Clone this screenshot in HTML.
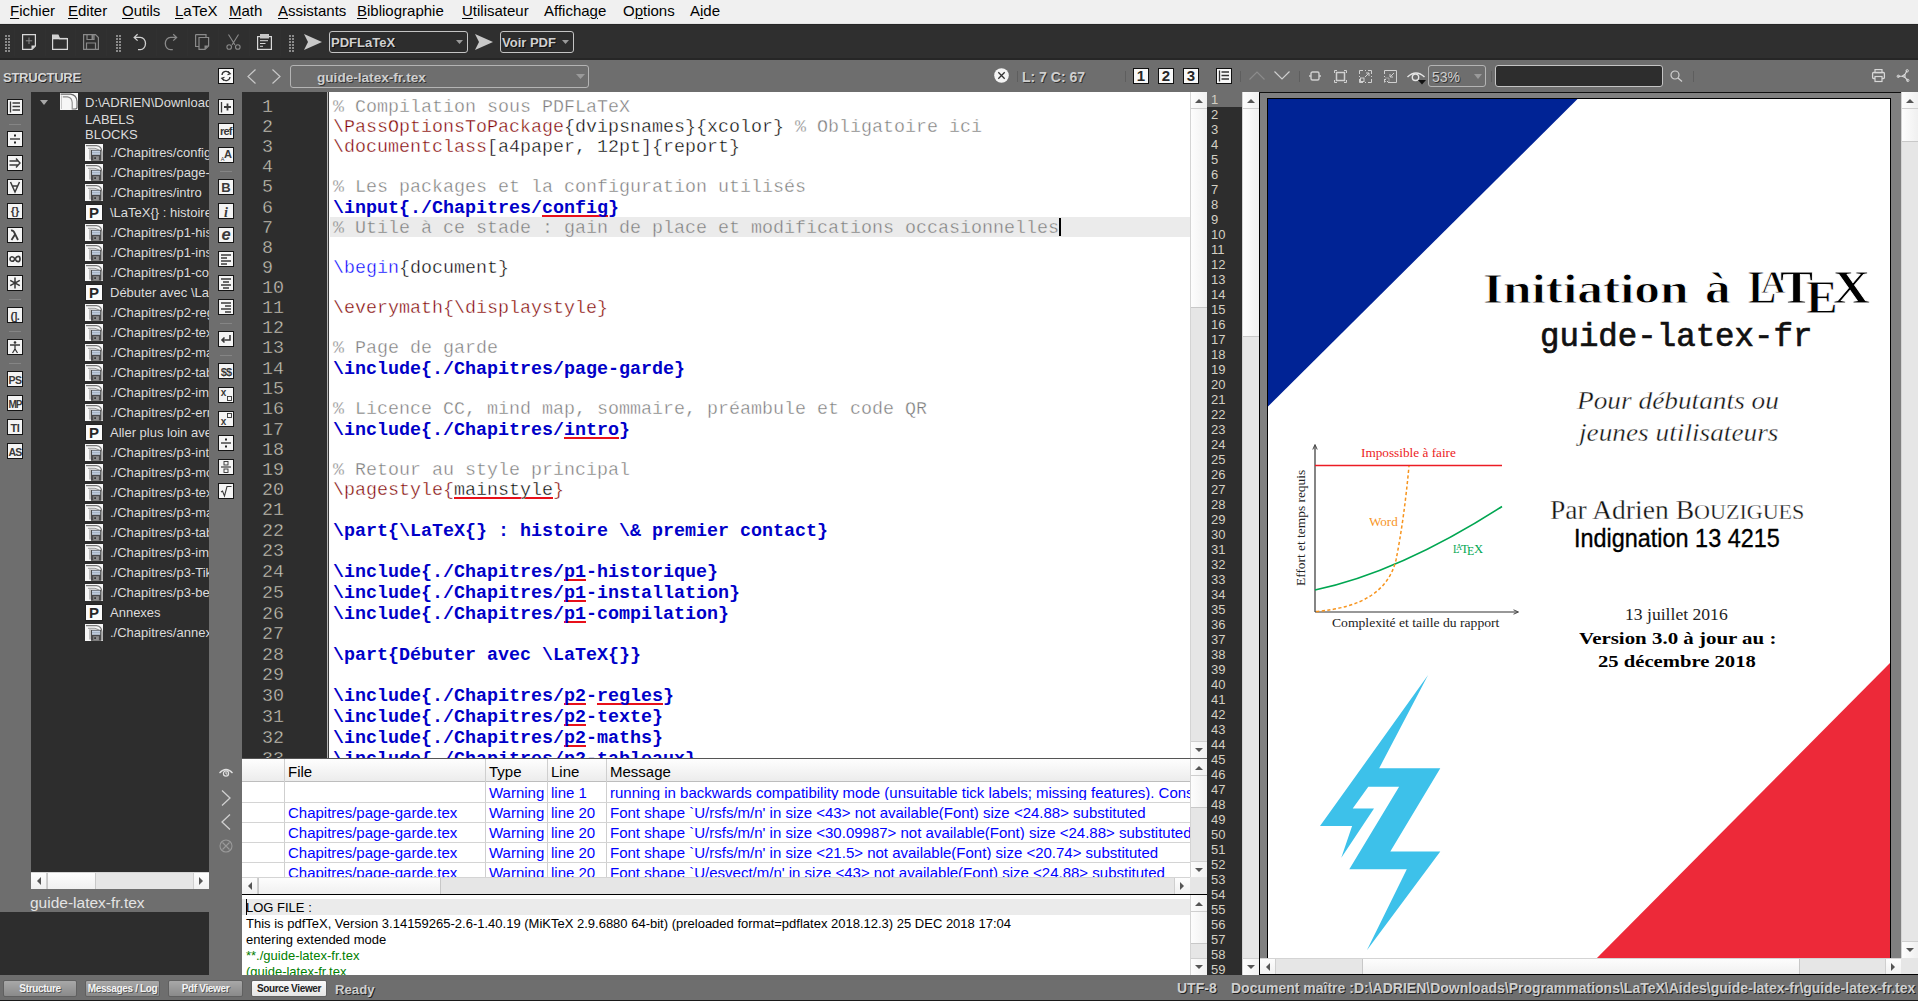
<!DOCTYPE html><html><head><meta charset="utf-8"><style>
*{margin:0;padding:0;box-sizing:border-box}
html,body{width:1918px;height:1001px;overflow:hidden;background:#6e6e6e;font-family:"Liberation Sans",sans-serif}
.a{position:absolute}
.t{position:absolute;white-space:pre;line-height:1}
.mono{font-family:"Liberation Mono",monospace}
.serif{font-family:"Liberation Serif",serif}
</style></head><body>
<div class="a" style="left:0px;top:0px;width:1918px;height:24px;background:#f0f0f0;"></div>
<div class="t" style="left:10px;top:3px;font-size:15px;color:#000;"><span style="text-decoration:underline;text-underline-offset:2px;text-decoration-thickness:1px">F</span>ichier</div>
<div class="t" style="left:68px;top:3px;font-size:15px;color:#000;"><span style="text-decoration:underline;text-underline-offset:2px;text-decoration-thickness:1px">E</span>diter</div>
<div class="t" style="left:122px;top:3px;font-size:15px;color:#000;"><span style="text-decoration:underline;text-underline-offset:2px;text-decoration-thickness:1px">O</span>utils</div>
<div class="t" style="left:175px;top:3px;font-size:15px;color:#000;"><span style="text-decoration:underline;text-underline-offset:2px;text-decoration-thickness:1px">L</span>aTeX</div>
<div class="t" style="left:229px;top:3px;font-size:15px;color:#000;"><span style="text-decoration:underline;text-underline-offset:2px;text-decoration-thickness:1px">M</span>ath</div>
<div class="t" style="left:278px;top:3px;font-size:15px;color:#000;"><span style="text-decoration:underline;text-underline-offset:2px;text-decoration-thickness:1px">A</span>ssistants</div>
<div class="t" style="left:357px;top:3px;font-size:15px;color:#000;"><span style="text-decoration:underline;text-underline-offset:2px;text-decoration-thickness:1px">B</span>ibliographie</div>
<div class="t" style="left:462px;top:3px;font-size:15px;color:#000;"><span style="text-decoration:underline;text-underline-offset:2px;text-decoration-thickness:1px">U</span>tilisateur</div>
<div class="t" style="left:544px;top:3px;font-size:15px;color:#000;">Afficha<span style="text-decoration:underline;text-underline-offset:2px;text-decoration-thickness:1px">g</span>e</div>
<div class="t" style="left:623px;top:3px;font-size:15px;color:#000;">O<span style="text-decoration:underline;text-underline-offset:2px;text-decoration-thickness:1px">p</span>tions</div>
<div class="t" style="left:690px;top:3px;font-size:15px;color:#000;">A<span style="text-decoration:underline;text-underline-offset:2px;text-decoration-thickness:1px">i</span>de</div>
<div class="a" style="left:0px;top:23px;width:1918px;height:1px;background:#e4e4e4;"></div>
<div class="a" style="left:0px;top:24px;width:1918px;height:36px;background:#2f2f2f;"></div>
<div class="a" style="left:0px;top:24px;width:1918px;height:1px;background:#262626;"></div>
<div class="a" style="left:0px;top:58px;width:1918px;height:2px;background:#262626;"></div>
<svg class="a" style="left:5px;top:34px;overflow:visible" width="5" height="18" viewBox="0 0 5 18"><rect x="0" y="1" width="2" height="2" fill="#8a8a8a"/><rect x="3" y="1" width="2" height="2" fill="#8a8a8a"/><rect x="0" y="4" width="2" height="2" fill="#8a8a8a"/><rect x="3" y="4" width="2" height="2" fill="#8a8a8a"/><rect x="0" y="7" width="2" height="2" fill="#8a8a8a"/><rect x="3" y="7" width="2" height="2" fill="#8a8a8a"/><rect x="0" y="10" width="2" height="2" fill="#8a8a8a"/><rect x="3" y="10" width="2" height="2" fill="#8a8a8a"/><rect x="0" y="13" width="2" height="2" fill="#8a8a8a"/><rect x="3" y="13" width="2" height="2" fill="#8a8a8a"/><rect x="0" y="16" width="2" height="2" fill="#8a8a8a"/><rect x="3" y="16" width="2" height="2" fill="#8a8a8a"/></svg>
<svg class="a" style="left:116px;top:34px;overflow:visible" width="5" height="18" viewBox="0 0 5 18"><rect x="0" y="1" width="2" height="2" fill="#8a8a8a"/><rect x="3" y="1" width="2" height="2" fill="#8a8a8a"/><rect x="0" y="4" width="2" height="2" fill="#8a8a8a"/><rect x="3" y="4" width="2" height="2" fill="#8a8a8a"/><rect x="0" y="7" width="2" height="2" fill="#8a8a8a"/><rect x="3" y="7" width="2" height="2" fill="#8a8a8a"/><rect x="0" y="10" width="2" height="2" fill="#8a8a8a"/><rect x="3" y="10" width="2" height="2" fill="#8a8a8a"/><rect x="0" y="13" width="2" height="2" fill="#8a8a8a"/><rect x="3" y="13" width="2" height="2" fill="#8a8a8a"/><rect x="0" y="16" width="2" height="2" fill="#8a8a8a"/><rect x="3" y="16" width="2" height="2" fill="#8a8a8a"/></svg>
<svg class="a" style="left:289px;top:34px;overflow:visible" width="5" height="18" viewBox="0 0 5 18"><rect x="0" y="1" width="2" height="2" fill="#8a8a8a"/><rect x="3" y="1" width="2" height="2" fill="#8a8a8a"/><rect x="0" y="4" width="2" height="2" fill="#8a8a8a"/><rect x="3" y="4" width="2" height="2" fill="#8a8a8a"/><rect x="0" y="7" width="2" height="2" fill="#8a8a8a"/><rect x="3" y="7" width="2" height="2" fill="#8a8a8a"/><rect x="0" y="10" width="2" height="2" fill="#8a8a8a"/><rect x="3" y="10" width="2" height="2" fill="#8a8a8a"/><rect x="0" y="13" width="2" height="2" fill="#8a8a8a"/><rect x="3" y="13" width="2" height="2" fill="#8a8a8a"/><rect x="0" y="16" width="2" height="2" fill="#8a8a8a"/><rect x="3" y="16" width="2" height="2" fill="#8a8a8a"/></svg>
<div class="a" style="left:14px;top:28px;width:1px;height:28px;background:#313131;"></div>
<div class="a" style="left:45px;top:28px;width:1px;height:28px;background:#313131;"></div>
<div class="a" style="left:75px;top:28px;width:1px;height:28px;background:#313131;"></div>
<div class="a" style="left:106px;top:28px;width:1px;height:28px;background:#313131;"></div>
<div class="a" style="left:156px;top:28px;width:1px;height:28px;background:#313131;"></div>
<div class="a" style="left:187px;top:28px;width:1px;height:28px;background:#313131;"></div>
<div class="a" style="left:218px;top:28px;width:1px;height:28px;background:#313131;"></div>
<div class="a" style="left:249px;top:28px;width:1px;height:28px;background:#313131;"></div>
<div class="a" style="left:280px;top:28px;width:1px;height:28px;background:#313131;"></div>
<svg class="a" style="left:22px;top:34px;overflow:visible" width="15" height="17" viewBox="0 0 15 17"><path d="M0.6 0.6H13.4V12L10 15.4H0.6Z" fill="none" stroke="#d8d8d8" stroke-width="1.2"/><path d="M13.4 11.5L9.5 15.4V11.5Z" fill="#d8d8d8"/><path d="M7 3.5V10M3.8 6.8H10.2" stroke="#8a8a8a" stroke-width="1"/></svg>
<svg class="a" style="left:52px;top:34px;overflow:visible" width="16" height="16" viewBox="0 0 16 16"><path d="M0.6 3V15.4H15.4V4.6H7.5L6 1H0.6Z" fill="none" stroke="#d8d8d8" stroke-width="1.2"/><path d="M0.6 1H6L7.3 4.6H0.6Z" fill="#d0d0d0"/><path d="M1 4.6H15" stroke="#d8d8d8" stroke-width="1.4"/></svg>
<svg class="a" style="left:83px;top:34px;overflow:visible" width="16" height="16" viewBox="0 0 16 16"><path d="M0.6 0.6H12.5L15.4 3.5V15.4H0.6Z" fill="none" stroke="#8a8a8a" stroke-width="1.2"/><path d="M4 0.6V5.5H11V0.6" fill="none" stroke="#8a8a8a" stroke-width="1.2"/><rect x="8.5" y="1" width="2" height="4" fill="#8a8a8a"/><path d="M3.5 15.4V9H12.5V15.4" fill="none" stroke="#8a8a8a" stroke-width="1.2"/></svg>
<svg class="a" style="left:134px;top:34px;overflow:visible" width="13" height="16" viewBox="0 0 13 16"><path d="M3.6 0.2L0.2 3.4L3.6 6.6M0.4 3.4H6.3A5.2 6.1 0 0 1 6.3 15.6H4" fill="none" stroke="#d0d0d0" stroke-width="1.3"/></svg>
<svg class="a" style="left:165px;top:34px;overflow:visible" width="13" height="16" viewBox="0 0 13 16"><path d="M8.2 0.2L11.6 3.4L8.2 6.6M11.4 3.4H5.5A5.2 6.1 0 0 0 5.5 15.6H7.8" fill="none" stroke="#8a8a8a" stroke-width="1.3"/></svg>
<svg class="a" style="left:195px;top:34px;overflow:visible" width="15" height="16" viewBox="0 0 15 16"><path d="M0.6 0.6H11V3.5M0.6 0.6V12.5H4" fill="none" stroke="#8a8a8a" stroke-width="1.2"/><path d="M4 3.5H13.6V12L10 15.4H4Z" fill="none" stroke="#8a8a8a" stroke-width="1.2"/><path d="M13.6 11.5L9.5 15.4V11.5Z" fill="#8a8a8a"/></svg>
<svg class="a" style="left:226px;top:34px;overflow:visible" width="15" height="16" viewBox="0 0 15 16"><path d="M2.5 0.5L9 11M12.5 0.5L6 11" stroke="#8a8a8a" stroke-width="1.1" fill="none"/><circle cx="3.2" cy="13" r="2.3" fill="none" stroke="#8a8a8a" stroke-width="1.1"/><circle cx="11.8" cy="13" r="2.3" fill="none" stroke="#8a8a8a" stroke-width="1.1"/></svg>
<svg class="a" style="left:257px;top:34px;overflow:visible" width="15" height="16" viewBox="0 0 15 16"><rect x="0.6" y="2.6" width="13.8" height="12.8" fill="none" stroke="#d8d8d8" stroke-width="1.2"/><rect x="3" y="0" width="9" height="4.5" fill="#c8c8c8"/><path d="M3 6.7H11M3 9.5H8.5M3 12.3H6" stroke="#d8d8d8" stroke-width="1"/></svg>
<svg class="a" style="left:304px;top:34px;overflow:visible" width="18" height="16" viewBox="0 0 18 16"><path d="M0 0L18 8L0 16L4 8Z" fill="#c8c8c8"/></svg>
<svg class="a" style="left:475px;top:34px;overflow:visible" width="18" height="16" viewBox="0 0 18 16"><path d="M0 0L18 8L0 16L4 8Z" fill="#c8c8c8"/></svg>
<div class="a" style="left:329px;top:31px;width:139px;height:22px;border:1px solid #c4c4c4;border-radius:3px;background:#2d2d2d"></div>
<div class="t" style="left:331px;top:36px;font-size:13px;color:#d0d0d0;font-weight:bold;text-shadow:1px 1px 0 #111">PDFLaTeX</div>
<svg class="a" style="left:456px;top:40px;overflow:visible" width="7" height="4" viewBox="0 0 7 4"><path d="M0 0H7L3.5 4Z" fill="#9a9a9a"/></svg>
<div class="a" style="left:500px;top:31px;width:74px;height:22px;border:1px solid #c4c4c4;border-radius:3px;background:#2d2d2d"></div>
<div class="t" style="left:502px;top:36px;font-size:13px;color:#d0d0d0;font-weight:bold;text-shadow:1px 1px 0 #111">Voir PDF</div>
<svg class="a" style="left:562px;top:40px;overflow:visible" width="7" height="4" viewBox="0 0 7 4"><path d="M0 0H7L3.5 4Z" fill="#9a9a9a"/></svg>
<div class="a" style="left:0px;top:60px;width:1918px;height:32px;background:#6e6e6e;"></div>
<div class="t" style="left:3px;top:71px;font-size:13px;color:#d8d8d8;font-weight:bold;letter-spacing:-0.25px;text-shadow:1px 1px 0 #222">STRUCTURE</div>
<div class="a" style="left:218px;top:68px;width:16px;height:16px;background:#f8f8f8;border:1px solid #111"><svg width="14" height="14" viewBox="0 0 14 14" style="display:block"><path d="M3 6A4 4 0 0 1 10.5 4.5M11 8A4 4 0 0 1 3.5 9.5" fill="none" stroke="#333" stroke-width="1.3"/><path d="M9 2.5L11.3 4.8L8.5 5.8M5 11.5L2.7 9.2L5.5 8.2" fill="none" stroke="#333" stroke-width="1.2"/></svg></div>
<svg class="a" style="left:247px;top:69px;overflow:visible" width="9" height="15" viewBox="0 0 9 15"><path d="M8.5 0.5L1 7.5L8.5 14.5" fill="none" stroke="#c8c8c8" stroke-width="1.2"/></svg>
<svg class="a" style="left:272px;top:69px;overflow:visible" width="9" height="15" viewBox="0 0 9 15"><path d="M0.5 0.5L8 7.5L0.5 14.5" fill="none" stroke="#c8c8c8" stroke-width="1.2"/></svg>
<div class="a" style="left:290px;top:65px;width:299px;height:23px;border:1px solid #b4b4b4;border-radius:3px"></div>
<div class="t" style="left:317px;top:71px;font-size:13.6px;color:#cfcfcf;font-weight:bold;text-shadow:1px 1px 0 #333">guide-latex-fr.tex</div>
<svg class="a" style="left:576px;top:74px;overflow:visible" width="9" height="5" viewBox="0 0 9 5"><path d="M0 0H9L4.5 5Z" fill="#9a9a9a"/></svg>
<svg class="a" style="left:994px;top:68px;overflow:visible" width="15" height="15" viewBox="0 0 15 15"><circle cx="7.5" cy="7.5" r="7.3" fill="#f4f4f4"/><path d="M4.3 4.3L10.7 10.7M10.7 4.3L4.3 10.7" stroke="#333" stroke-width="1.3"/></svg>
<div class="a" style="left:1017px;top:71px;width:1px;height:11px;background:#5e5e5e;"></div>
<div class="t" style="left:1022px;top:70px;font-size:14px;color:#cfcfcf;font-weight:bold;text-shadow:1px 1px 0 #333">L: 7 C: 67</div>
<div class="a" style="left:1125px;top:71px;width:1px;height:11px;background:#5e5e5e;"></div>
<div class="a" style="left:1133px;top:68px;width:16px;height:16px;background:#f8f8f8;border:1px solid #111;font:bold 15px/14px 'Liberation Sans';color:#262626;text-align:center">1</div>
<div class="a" style="left:1158px;top:68px;width:16px;height:16px;background:#f8f8f8;border:1px solid #111;font:bold 15px/14px 'Liberation Sans';color:#262626;text-align:center">2</div>
<div class="a" style="left:1183px;top:68px;width:16px;height:16px;background:#f8f8f8;border:1px solid #111;font:bold 15px/14px 'Liberation Sans';color:#262626;text-align:center">3</div>
<div class="a" style="left:1216px;top:68px;width:16px;height:16px;background:#f8f8f8;border:1px solid #111"><svg width="14" height="14" viewBox="0 0 14 14" style="display:block"><path d="M2.5 1.5V12.5" stroke="#333" stroke-width="1.3"/><path d="M4.5 3H12M4.5 6.5H12M4.5 10H12" stroke="#333" stroke-width="1.6"/></svg></div>
<div class="a" style="left:1240px;top:71px;width:1px;height:11px;background:#5e5e5e;"></div>
<svg class="a" style="left:1249px;top:71px;overflow:visible" width="16" height="9" viewBox="0 0 16 9"><path d="M0.5 8.5L8 1L15.5 8.5" fill="none" stroke="#8c8c8c" stroke-width="1.2"/></svg>
<svg class="a" style="left:1274px;top:71px;overflow:visible" width="16" height="9" viewBox="0 0 16 9"><path d="M0.5 0.5L8 8L15.5 0.5" fill="none" stroke="#cfcfcf" stroke-width="1.2"/></svg>
<div class="a" style="left:1299px;top:71px;width:1px;height:11px;background:#5e5e5e;"></div>
<svg class="a" style="left:1309px;top:71px;overflow:visible" width="12" height="10" viewBox="0 0 12 10"><rect x="2" y="1" width="8" height="8" rx="1.5" fill="none" stroke="#d0d0d0" stroke-width="1.4"/><path d="M0 5H2M10 5H12" stroke="#d0d0d0" stroke-width="1.4"/></svg>
<svg class="a" style="left:1334px;top:70px;overflow:visible" width="13" height="13" viewBox="0 0 13 13"><rect x="2.5" y="2.5" width="8" height="8" fill="none" stroke="#d0d0d0" stroke-width="1.5"/><path d="M0.5 3V0.5H3M10 0.5H12.5V3M12.5 10V12.5H10M3 12.5H0.5V10" fill="none" stroke="#d0d0d0" stroke-width="1"/></svg>
<svg class="a" style="left:1359px;top:70px;overflow:visible" width="13" height="13" viewBox="0 0 13 13"><path d="M0.5 4V0.5H4M9 0.5H12.5V4M12.5 9V12.5H9M4 12.5H0.5V9M6 0.5H7M0.5 6V7M12.5 6V7M6 12.5H7" fill="none" stroke="#d0d0d0" stroke-width="1"/><rect x="1.5" y="8" width="3.5" height="3.5" fill="none" stroke="#d0d0d0" stroke-width="1"/><path d="M6 7L10 3M7 3H10V6" fill="none" stroke="#d0d0d0" stroke-width="1"/></svg>
<svg class="a" style="left:1384px;top:70px;overflow:visible" width="13" height="13" viewBox="0 0 13 13"><path d="M0.5 4V0.5H12.5V12.5H4M0.5 9V12.5M0.5 6V7M3 12.5" fill="none" stroke="#d0d0d0" stroke-width="1"/><rect x="1.5" y="8" width="3.5" height="3.5" fill="none" stroke="#d0d0d0" stroke-width="1" stroke-dasharray="1 1"/><path d="M10 3L6 7M6 4V7H9" fill="none" stroke="#d0d0d0" stroke-width="1"/></svg>
<svg class="a" style="left:1407px;top:71px;overflow:visible" width="19" height="14" viewBox="0 0 19 14"><path d="M0.5 6Q9 -2 17.5 6" fill="none" stroke="#e6e6e6" stroke-width="1.5"/><circle cx="8.5" cy="6.3" r="3.2" fill="none" stroke="#e6e6e6" stroke-width="1.4"/><path d="M11 9H19L15 13.5Z" fill="#111"/></svg>
<div class="a" style="left:1428px;top:65px;width:58px;height:22px;border:1px solid #b4b4b4;border-radius:3px"></div>
<div class="t" style="left:1432px;top:70px;font-size:14px;color:#cfcfcf;text-shadow:1px 1px 0 #333">53%</div>
<svg class="a" style="left:1474px;top:74px;overflow:visible" width="8" height="5" viewBox="0 0 8 5"><path d="M0 0H8L4 5Z" fill="#9a9a9a"/></svg>
<div class="a" style="left:1491px;top:71px;width:1px;height:11px;background:#5e5e5e;"></div>
<div class="a" style="left:1495px;top:65px;width:168px;height:22px;border:1px solid #c4c4c4;border-radius:3px;background:#2d2d2d"></div>
<svg class="a" style="left:1670px;top:70px;overflow:visible" width="13" height="12" viewBox="0 0 13 12"><circle cx="5" cy="5" r="4" fill="none" stroke="#cfcfcf" stroke-width="1.2"/><path d="M8 8L12 11.5" stroke="#cfcfcf" stroke-width="1.3"/></svg>
<div class="a" style="left:1693px;top:71px;width:1px;height:11px;background:#5e5e5e;"></div>
<svg class="a" style="left:1872px;top:69px;overflow:visible" width="13" height="13" viewBox="0 0 13 13"><rect x="3" y="0.6" width="7" height="3" fill="none" stroke="#d8d8d8" stroke-width="1.2"/><rect x="0.6" y="3.5" width="11.8" height="6" rx="1" fill="none" stroke="#d8d8d8" stroke-width="1.3"/><rect x="3" y="7.5" width="7" height="5" fill="#6e6e6e" stroke="#d8d8d8" stroke-width="1.2"/></svg>
<svg class="a" style="left:1897px;top:69px;overflow:visible" width="13" height="13" viewBox="0 0 13 13"><path d="M0.7 7.3L5.2 7.3L8 5.2L10.1 1.6M5.2 7.3L8 8.5L10.9 11.7M8 5.2L8 8.5" fill="none" stroke="#e0e0e0" stroke-width="1.1"/><circle cx="1.3" cy="7.3" r="1.2" fill="none" stroke="#e0e0e0" stroke-width="0.9"/><circle cx="10.2" cy="1.8" r="1.2" fill="none" stroke="#e0e0e0" stroke-width="0.9"/><circle cx="10.8" cy="11.4" r="1.2" fill="none" stroke="#e0e0e0" stroke-width="0.9"/></svg>
<div class="a" style="left:31px;top:92px;width:178px;height:780px;background:#2d2d2d;"></div>
<div class="a" style="left:0px;top:912px;width:209px;height:63px;background:#2d2d2d;"></div>
<div class="a" style="left:242px;top:92px;width:85px;height:666px;background:#2d2d2d;"></div>
<div class="a" style="left:327px;top:92px;width:1px;height:666px;background:#b4b4b4;"></div>
<div class="a" style="left:328px;top:92px;width:1px;height:666px;background:#3a3a3a;"></div>
<div class="a" style="left:329px;top:92px;width:861px;height:666px;background:#fff;"></div>
<div class="a" style="left:1190px;top:92px;width:17px;height:666px;background:#e6e6e6;"></div>
<div class="a" style="left:242px;top:92px;width:948px;height:666px;overflow:hidden">
<div class="a mono" style="left:20px;top:6px;height:20px;line-height:20px;font-size:18.34px;color:#ccc8bc;white-space:pre;-webkit-text-stroke:0.4px #2d2d2d">1</div>
<div class="a mono" style="left:91px;top:6px;height:20px;line-height:20px;font-size:18.34px;white-space:pre;-webkit-text-stroke:0.4px #fff"><span style="color:#7a7a7a;">% Compilation sous PDFLaTeX</span></div>
<div class="a mono" style="left:20px;top:26px;height:20px;line-height:20px;font-size:18.34px;color:#ccc8bc;white-space:pre;-webkit-text-stroke:0.4px #2d2d2d">2</div>
<div class="a mono" style="left:91px;top:26px;height:20px;line-height:20px;font-size:18.34px;white-space:pre;-webkit-text-stroke:0.4px #fff"><span style="color:#800000;">\PassOptionsToPackage</span><span style="color:#000;">{dvipsnames}{xcolor} </span><span style="color:#7a7a7a;">% Obligatoire ici</span></div>
<div class="a mono" style="left:20px;top:46px;height:20px;line-height:20px;font-size:18.34px;color:#ccc8bc;white-space:pre;-webkit-text-stroke:0.4px #2d2d2d">3</div>
<div class="a mono" style="left:91px;top:46px;height:20px;line-height:20px;font-size:18.34px;white-space:pre;-webkit-text-stroke:0.4px #fff"><span style="color:#800000;">\documentclass</span><span style="color:#000;">[a4paper, 12pt]{report}</span></div>
<div class="a mono" style="left:20px;top:66px;height:20px;line-height:20px;font-size:18.34px;color:#ccc8bc;white-space:pre;-webkit-text-stroke:0.4px #2d2d2d">4</div>
<div class="a mono" style="left:91px;top:66px;height:20px;line-height:20px;font-size:18.34px;white-space:pre;-webkit-text-stroke:0.4px #fff"></div>
<div class="a mono" style="left:20px;top:86px;height:20px;line-height:20px;font-size:18.34px;color:#ccc8bc;white-space:pre;-webkit-text-stroke:0.4px #2d2d2d">5</div>
<div class="a mono" style="left:91px;top:86px;height:20px;line-height:20px;font-size:18.34px;white-space:pre;-webkit-text-stroke:0.4px #fff"><span style="color:#7a7a7a;">% Les packages et la configuration utilisés</span></div>
<div class="a mono" style="left:20px;top:107px;height:20px;line-height:20px;font-size:18.34px;color:#ccc8bc;white-space:pre;-webkit-text-stroke:0.4px #2d2d2d">6</div>
<div class="a mono" style="left:91px;top:107px;height:20px;line-height:20px;font-size:18.34px;white-space:pre;-webkit-text-stroke:0.4px #fff"><span style="color:#0000c8;font-weight:bold;-webkit-text-stroke:0;">\input{./Chapitres/</span><span style="color:#0000c8;font-weight:bold;-webkit-text-stroke:0;text-decoration:underline solid #e8101a;text-decoration-thickness:2px;text-underline-offset:2px;text-decoration-skip-ink:none;">config</span><span style="color:#0000c8;font-weight:bold;-webkit-text-stroke:0;">}</span></div>
<div class="a" style="left:88px;top:125px;width:860px;height:20px;background:#ebebeb"></div>
<div class="a mono" style="left:20px;top:127px;height:20px;line-height:20px;font-size:18.34px;color:#ccc8bc;white-space:pre;-webkit-text-stroke:0.4px #2d2d2d">7</div>
<div class="a mono" style="left:91px;top:127px;height:20px;line-height:20px;font-size:18.34px;white-space:pre;-webkit-text-stroke:0.4px #ebebeb"><span style="color:#7a7a7a;">% Utile à ce stade : gain de place et modifications occasionnelles</span></div>
<div class="a" style="left:817px;top:126px;width:2px;height:18px;background:#000"></div>
<div class="a mono" style="left:20px;top:147px;height:20px;line-height:20px;font-size:18.34px;color:#ccc8bc;white-space:pre;-webkit-text-stroke:0.4px #2d2d2d">8</div>
<div class="a mono" style="left:91px;top:147px;height:20px;line-height:20px;font-size:18.34px;white-space:pre;-webkit-text-stroke:0.4px #fff"></div>
<div class="a mono" style="left:20px;top:167px;height:20px;line-height:20px;font-size:18.34px;color:#ccc8bc;white-space:pre;-webkit-text-stroke:0.4px #2d2d2d">9</div>
<div class="a mono" style="left:91px;top:167px;height:20px;line-height:20px;font-size:18.34px;white-space:pre;-webkit-text-stroke:0.4px #fff"><span style="color:#0000ff;">\begin</span><span style="color:#000;">{document}</span></div>
<div class="a mono" style="left:20px;top:187px;height:20px;line-height:20px;font-size:18.34px;color:#ccc8bc;white-space:pre;-webkit-text-stroke:0.4px #2d2d2d">10</div>
<div class="a mono" style="left:91px;top:187px;height:20px;line-height:20px;font-size:18.34px;white-space:pre;-webkit-text-stroke:0.4px #fff"></div>
<div class="a mono" style="left:20px;top:207px;height:20px;line-height:20px;font-size:18.34px;color:#ccc8bc;white-space:pre;-webkit-text-stroke:0.4px #2d2d2d">11</div>
<div class="a mono" style="left:91px;top:207px;height:20px;line-height:20px;font-size:18.34px;white-space:pre;-webkit-text-stroke:0.4px #fff"><span style="color:#800000;">\everymath{\displaystyle}</span></div>
<div class="a mono" style="left:20px;top:227px;height:20px;line-height:20px;font-size:18.34px;color:#ccc8bc;white-space:pre;-webkit-text-stroke:0.4px #2d2d2d">12</div>
<div class="a mono" style="left:91px;top:227px;height:20px;line-height:20px;font-size:18.34px;white-space:pre;-webkit-text-stroke:0.4px #fff"></div>
<div class="a mono" style="left:20px;top:247px;height:20px;line-height:20px;font-size:18.34px;color:#ccc8bc;white-space:pre;-webkit-text-stroke:0.4px #2d2d2d">13</div>
<div class="a mono" style="left:91px;top:247px;height:20px;line-height:20px;font-size:18.34px;white-space:pre;-webkit-text-stroke:0.4px #fff"><span style="color:#7a7a7a;">% Page de garde</span></div>
<div class="a mono" style="left:20px;top:268px;height:20px;line-height:20px;font-size:18.34px;color:#ccc8bc;white-space:pre;-webkit-text-stroke:0.4px #2d2d2d">14</div>
<div class="a mono" style="left:91px;top:268px;height:20px;line-height:20px;font-size:18.34px;white-space:pre;-webkit-text-stroke:0.4px #fff"><span style="color:#0000c8;font-weight:bold;-webkit-text-stroke:0;">\include{./Chapitres/page-garde}</span></div>
<div class="a mono" style="left:20px;top:288px;height:20px;line-height:20px;font-size:18.34px;color:#ccc8bc;white-space:pre;-webkit-text-stroke:0.4px #2d2d2d">15</div>
<div class="a mono" style="left:91px;top:288px;height:20px;line-height:20px;font-size:18.34px;white-space:pre;-webkit-text-stroke:0.4px #fff"></div>
<div class="a mono" style="left:20px;top:308px;height:20px;line-height:20px;font-size:18.34px;color:#ccc8bc;white-space:pre;-webkit-text-stroke:0.4px #2d2d2d">16</div>
<div class="a mono" style="left:91px;top:308px;height:20px;line-height:20px;font-size:18.34px;white-space:pre;-webkit-text-stroke:0.4px #fff"><span style="color:#7a7a7a;">% Licence CC, mind map, sommaire, préambule et code QR</span></div>
<div class="a mono" style="left:20px;top:329px;height:20px;line-height:20px;font-size:18.34px;color:#ccc8bc;white-space:pre;-webkit-text-stroke:0.4px #2d2d2d">17</div>
<div class="a mono" style="left:91px;top:329px;height:20px;line-height:20px;font-size:18.34px;white-space:pre;-webkit-text-stroke:0.4px #fff"><span style="color:#0000c8;font-weight:bold;-webkit-text-stroke:0;">\include{./Chapitres/</span><span style="color:#0000c8;font-weight:bold;-webkit-text-stroke:0;text-decoration:underline solid #e8101a;text-decoration-thickness:2px;text-underline-offset:2px;text-decoration-skip-ink:none;">intro</span><span style="color:#0000c8;font-weight:bold;-webkit-text-stroke:0;">}</span></div>
<div class="a mono" style="left:20px;top:349px;height:20px;line-height:20px;font-size:18.34px;color:#ccc8bc;white-space:pre;-webkit-text-stroke:0.4px #2d2d2d">18</div>
<div class="a mono" style="left:91px;top:349px;height:20px;line-height:20px;font-size:18.34px;white-space:pre;-webkit-text-stroke:0.4px #fff"></div>
<div class="a mono" style="left:20px;top:369px;height:20px;line-height:20px;font-size:18.34px;color:#ccc8bc;white-space:pre;-webkit-text-stroke:0.4px #2d2d2d">19</div>
<div class="a mono" style="left:91px;top:369px;height:20px;line-height:20px;font-size:18.34px;white-space:pre;-webkit-text-stroke:0.4px #fff"><span style="color:#7a7a7a;">% Retour au style principal</span></div>
<div class="a mono" style="left:20px;top:389px;height:20px;line-height:20px;font-size:18.34px;color:#ccc8bc;white-space:pre;-webkit-text-stroke:0.4px #2d2d2d">20</div>
<div class="a mono" style="left:91px;top:389px;height:20px;line-height:20px;font-size:18.34px;white-space:pre;-webkit-text-stroke:0.4px #fff"><span style="color:#800000;">\pagestyle{</span><span style="color:#000;text-decoration:underline solid #e8101a;text-decoration-thickness:2px;text-underline-offset:2px;text-decoration-skip-ink:none;">mainstyle</span><span style="color:#800000;">}</span></div>
<div class="a mono" style="left:20px;top:409px;height:20px;line-height:20px;font-size:18.34px;color:#ccc8bc;white-space:pre;-webkit-text-stroke:0.4px #2d2d2d">21</div>
<div class="a mono" style="left:91px;top:409px;height:20px;line-height:20px;font-size:18.34px;white-space:pre;-webkit-text-stroke:0.4px #fff"></div>
<div class="a mono" style="left:20px;top:430px;height:20px;line-height:20px;font-size:18.34px;color:#ccc8bc;white-space:pre;-webkit-text-stroke:0.4px #2d2d2d">22</div>
<div class="a mono" style="left:91px;top:430px;height:20px;line-height:20px;font-size:18.34px;white-space:pre;-webkit-text-stroke:0.4px #fff"><span style="color:#0000c8;font-weight:bold;-webkit-text-stroke:0;">\part{\LaTeX{} : histoire \&amp; premier contact}</span></div>
<div class="a mono" style="left:20px;top:450px;height:20px;line-height:20px;font-size:18.34px;color:#ccc8bc;white-space:pre;-webkit-text-stroke:0.4px #2d2d2d">23</div>
<div class="a mono" style="left:91px;top:450px;height:20px;line-height:20px;font-size:18.34px;white-space:pre;-webkit-text-stroke:0.4px #fff"></div>
<div class="a mono" style="left:20px;top:471px;height:20px;line-height:20px;font-size:18.34px;color:#ccc8bc;white-space:pre;-webkit-text-stroke:0.4px #2d2d2d">24</div>
<div class="a mono" style="left:91px;top:471px;height:20px;line-height:20px;font-size:18.34px;white-space:pre;-webkit-text-stroke:0.4px #fff"><span style="color:#0000c8;font-weight:bold;-webkit-text-stroke:0;">\include{./Chapitres/</span><span style="color:#0000c8;font-weight:bold;-webkit-text-stroke:0;text-decoration:underline solid #e8101a;text-decoration-thickness:2px;text-underline-offset:2px;text-decoration-skip-ink:none;">p1</span><span style="color:#0000c8;font-weight:bold;-webkit-text-stroke:0;">-historique}</span></div>
<div class="a mono" style="left:20px;top:492px;height:20px;line-height:20px;font-size:18.34px;color:#ccc8bc;white-space:pre;-webkit-text-stroke:0.4px #2d2d2d">25</div>
<div class="a mono" style="left:91px;top:492px;height:20px;line-height:20px;font-size:18.34px;white-space:pre;-webkit-text-stroke:0.4px #fff"><span style="color:#0000c8;font-weight:bold;-webkit-text-stroke:0;">\include{./Chapitres/</span><span style="color:#0000c8;font-weight:bold;-webkit-text-stroke:0;text-decoration:underline solid #e8101a;text-decoration-thickness:2px;text-underline-offset:2px;text-decoration-skip-ink:none;">p1</span><span style="color:#0000c8;font-weight:bold;-webkit-text-stroke:0;">-installation}</span></div>
<div class="a mono" style="left:20px;top:513px;height:20px;line-height:20px;font-size:18.34px;color:#ccc8bc;white-space:pre;-webkit-text-stroke:0.4px #2d2d2d">26</div>
<div class="a mono" style="left:91px;top:513px;height:20px;line-height:20px;font-size:18.34px;white-space:pre;-webkit-text-stroke:0.4px #fff"><span style="color:#0000c8;font-weight:bold;-webkit-text-stroke:0;">\include{./Chapitres/</span><span style="color:#0000c8;font-weight:bold;-webkit-text-stroke:0;text-decoration:underline solid #e8101a;text-decoration-thickness:2px;text-underline-offset:2px;text-decoration-skip-ink:none;">p1</span><span style="color:#0000c8;font-weight:bold;-webkit-text-stroke:0;">-compilation}</span></div>
<div class="a mono" style="left:20px;top:533px;height:20px;line-height:20px;font-size:18.34px;color:#ccc8bc;white-space:pre;-webkit-text-stroke:0.4px #2d2d2d">27</div>
<div class="a mono" style="left:91px;top:533px;height:20px;line-height:20px;font-size:18.34px;white-space:pre;-webkit-text-stroke:0.4px #fff"></div>
<div class="a mono" style="left:20px;top:554px;height:20px;line-height:20px;font-size:18.34px;color:#ccc8bc;white-space:pre;-webkit-text-stroke:0.4px #2d2d2d">28</div>
<div class="a mono" style="left:91px;top:554px;height:20px;line-height:20px;font-size:18.34px;white-space:pre;-webkit-text-stroke:0.4px #fff"><span style="color:#0000c8;font-weight:bold;-webkit-text-stroke:0;">\part{Débuter avec \LaTeX{}}</span></div>
<div class="a mono" style="left:20px;top:574px;height:20px;line-height:20px;font-size:18.34px;color:#ccc8bc;white-space:pre;-webkit-text-stroke:0.4px #2d2d2d">29</div>
<div class="a mono" style="left:91px;top:574px;height:20px;line-height:20px;font-size:18.34px;white-space:pre;-webkit-text-stroke:0.4px #fff"></div>
<div class="a mono" style="left:20px;top:595px;height:20px;line-height:20px;font-size:18.34px;color:#ccc8bc;white-space:pre;-webkit-text-stroke:0.4px #2d2d2d">30</div>
<div class="a mono" style="left:91px;top:595px;height:20px;line-height:20px;font-size:18.34px;white-space:pre;-webkit-text-stroke:0.4px #fff"><span style="color:#0000c8;font-weight:bold;-webkit-text-stroke:0;">\include{./Chapitres/</span><span style="color:#0000c8;font-weight:bold;-webkit-text-stroke:0;text-decoration:underline solid #e8101a;text-decoration-thickness:2px;text-underline-offset:2px;text-decoration-skip-ink:none;">p2</span><span style="color:#0000c8;font-weight:bold;-webkit-text-stroke:0;">-</span><span style="color:#0000c8;font-weight:bold;-webkit-text-stroke:0;text-decoration:underline solid #e8101a;text-decoration-thickness:2px;text-underline-offset:2px;text-decoration-skip-ink:none;">regles</span><span style="color:#0000c8;font-weight:bold;-webkit-text-stroke:0;">}</span></div>
<div class="a mono" style="left:20px;top:616px;height:20px;line-height:20px;font-size:18.34px;color:#ccc8bc;white-space:pre;-webkit-text-stroke:0.4px #2d2d2d">31</div>
<div class="a mono" style="left:91px;top:616px;height:20px;line-height:20px;font-size:18.34px;white-space:pre;-webkit-text-stroke:0.4px #fff"><span style="color:#0000c8;font-weight:bold;-webkit-text-stroke:0;">\include{./Chapitres/</span><span style="color:#0000c8;font-weight:bold;-webkit-text-stroke:0;text-decoration:underline solid #e8101a;text-decoration-thickness:2px;text-underline-offset:2px;text-decoration-skip-ink:none;">p2</span><span style="color:#0000c8;font-weight:bold;-webkit-text-stroke:0;">-texte}</span></div>
<div class="a mono" style="left:20px;top:637px;height:20px;line-height:20px;font-size:18.34px;color:#ccc8bc;white-space:pre;-webkit-text-stroke:0.4px #2d2d2d">32</div>
<div class="a mono" style="left:91px;top:637px;height:20px;line-height:20px;font-size:18.34px;white-space:pre;-webkit-text-stroke:0.4px #fff"><span style="color:#0000c8;font-weight:bold;-webkit-text-stroke:0;">\include{./Chapitres/</span><span style="color:#0000c8;font-weight:bold;-webkit-text-stroke:0;text-decoration:underline solid #e8101a;text-decoration-thickness:2px;text-underline-offset:2px;text-decoration-skip-ink:none;">p2</span><span style="color:#0000c8;font-weight:bold;-webkit-text-stroke:0;">-maths}</span></div>
<div class="a mono" style="left:20px;top:658px;height:20px;line-height:20px;font-size:18.34px;color:#ccc8bc;white-space:pre;-webkit-text-stroke:0.4px #2d2d2d">33</div>
<div class="a mono" style="left:91px;top:658px;height:20px;line-height:20px;font-size:18.34px;white-space:pre;-webkit-text-stroke:0.4px #fff"><span style="color:#0000c8;font-weight:bold;-webkit-text-stroke:0;">\include{./Chapitres/</span><span style="color:#0000c8;font-weight:bold;-webkit-text-stroke:0;text-decoration:underline solid #e8101a;text-decoration-thickness:2px;text-underline-offset:2px;text-decoration-skip-ink:none;">p2</span><span style="color:#0000c8;font-weight:bold;-webkit-text-stroke:0;">-tableaux}</span></div>
</div>
<div class="a" style="left:7px;top:99px;width:16px;height:16px;background:#f4f4f4;border:1px solid #151515"><svg width="14" height="14" viewBox="0 0 14 14" style="display:block"><path d="M2.5 1.5V12.5" stroke="#3a3a3a" stroke-width="1.3" fill="none"/><path d="M4.5 3H12M4.5 6.5H12M4.5 10H12" stroke="#3a3a3a" stroke-width="1.6" fill="none"/></svg></div>
<div class="a" style="left:7px;top:131px;width:16px;height:16px;background:#f4f4f4;border:1px solid #151515"><svg width="14" height="14" viewBox="0 0 14 14" style="display:block"><path d="M2 7H12" stroke="#3a3a3a" stroke-width="1.4" fill="none"/><rect x="6" y="2.5" width="2" height="2" fill="#222"/><rect x="6" y="9.5" width="2" height="2" fill="#222"/></svg></div>
<div class="a" style="left:7px;top:155px;width:16px;height:16px;background:#f4f4f4;border:1px solid #151515"><svg width="14" height="14" viewBox="0 0 14 14" style="display:block"><path d="M1.5 5H10M1.5 9H10M8 2.5L12 7L8 11.5" stroke="#3a3a3a" stroke-width="1.4" fill="none"/></svg></div>
<div class="a" style="left:7px;top:179px;width:16px;height:16px;background:#f4f4f4;border:1px solid #151515"><svg width="14" height="14" viewBox="0 0 14 14" style="display:block"><path d="M2.5 2L7 12L11.5 2M4.3 6H9.7" stroke="#3a3a3a" stroke-width="1.5" fill="none"/></svg></div>
<div class="a" style="left:7px;top:203px;width:16px;height:16px;background:#f4f4f4;border:1px solid #151515"><svg width="14" height="14" viewBox="0 0 14 14" style="display:block"><text x="7" y="11" font-size="11" font-family="Liberation Sans" font-weight="bold" text-anchor="middle" fill="#3a3a3a" >{}</text></svg></div>
<div class="a" style="left:7px;top:227px;width:16px;height:16px;background:#f4f4f4;border:1px solid #151515"><svg width="14" height="14" viewBox="0 0 14 14" style="display:block"><path d="M3 2.5Q5.5 2 7 6L10 12M7 6.5L3.5 12" stroke="#3a3a3a" stroke-width="1.8" fill="none"/></svg></div>
<div class="a" style="left:7px;top:251px;width:16px;height:16px;background:#f4f4f4;border:1px solid #151515"><svg width="14" height="14" viewBox="0 0 14 14" style="display:block"><path d="M7 7C5 3.5 2 4.5 2 7S5 10.5 7 7S12 3.5 12 7S9 10.5 7 7" stroke="#3a3a3a" stroke-width="1.6" fill="none"/></svg></div>
<div class="a" style="left:7px;top:275px;width:16px;height:16px;background:#f4f4f4;border:1px solid #151515"><svg width="14" height="14" viewBox="0 0 14 14" style="display:block"><path d="M7 1.5V12.5M2.2 4.3L11.8 9.7M2.2 9.7L11.8 4.3" stroke="#3a3a3a" stroke-width="1.5" fill="none"/></svg></div>
<div class="a" style="left:7px;top:307px;width:16px;height:16px;background:#f4f4f4;border:1px solid #151515"><svg width="14" height="14" viewBox="0 0 14 14" style="display:block"><text x="7" y="11.5" font-size="11" font-family="Liberation Sans" font-weight="bold" text-anchor="middle" fill="#3a3a3a" letter-spacing="-0.5">(].</text></svg></div>
<div class="a" style="left:7px;top:339px;width:16px;height:16px;background:#f4f4f4;border:1px solid #151515"><svg width="14" height="14" viewBox="0 0 14 14" style="display:block"><circle cx="7" cy="2.5" r="1.3" fill="#333"/><path d="M2 5H12M7 5V9M7 9L4.5 13M7 9L9.5 13" stroke="#3a3a3a" stroke-width="1.3" fill="none"/></svg></div>
<div class="a" style="left:7px;top:371px;width:16px;height:16px;background:#f4f4f4;border:1px solid #151515"><svg width="14" height="14" viewBox="0 0 14 14" style="display:block"><text x="7" y="11.5" font-size="10.5" font-family="Liberation Sans" font-weight="bold" text-anchor="middle" fill="#3a3a3a" letter-spacing="-0.6">PS</text></svg></div>
<div class="a" style="left:7px;top:395px;width:16px;height:16px;background:#f4f4f4;border:1px solid #151515"><svg width="14" height="14" viewBox="0 0 14 14" style="display:block"><text x="7" y="11.5" font-size="10" font-family="Liberation Sans" font-weight="bold" text-anchor="middle" fill="#3a3a3a" letter-spacing="-1">MP</text></svg></div>
<div class="a" style="left:7px;top:419px;width:16px;height:16px;background:#f4f4f4;border:1px solid #151515"><svg width="14" height="14" viewBox="0 0 14 14" style="display:block"><text x="7" y="11.5" font-size="11" font-family="Liberation Sans" font-weight="bold" text-anchor="middle" fill="#3a3a3a" letter-spacing="-0.5">TI</text></svg></div>
<div class="a" style="left:7px;top:443px;width:16px;height:16px;background:#f4f4f4;border:1px solid #151515"><svg width="14" height="14" viewBox="0 0 14 14" style="display:block"><text x="7" y="11.5" font-size="10.5" font-family="Liberation Sans" font-weight="bold" text-anchor="middle" fill="#3a3a3a" letter-spacing="-0.8">AS</text></svg></div>
<div class="a" style="left:9px;top:124px;width:12px;height:1px;background:#858585;"></div>
<div class="a" style="left:9px;top:299px;width:12px;height:1px;background:#858585;"></div>
<div class="a" style="left:9px;top:331px;width:12px;height:1px;background:#858585;"></div>
<div class="a" style="left:9px;top:363px;width:12px;height:1px;background:#858585;"></div>
<div class="a" style="left:218px;top:99px;width:16px;height:16px;background:#f4f4f4;border:1px solid #151515"><svg width="14" height="14" viewBox="0 0 14 14" style="display:block"><path d="M2.5 2V12.5" stroke="#3a3a3a" stroke-width="1.3" fill="none"/><path d="M5 7H12M8.5 3.5V10.5" stroke="#3a3a3a" stroke-width="1.8" fill="none"/></svg></div>
<div class="a" style="left:218px;top:123px;width:16px;height:16px;background:#f4f4f4;border:1px solid #151515"><svg width="14" height="14" viewBox="0 0 14 14" style="display:block"><text x="6.8" y="11" font-size="11" font-family="Liberation Sans" font-weight="bold" text-anchor="middle" fill="#3a3a3a" letter-spacing="-0.9">ref</text></svg></div>
<div class="a" style="left:218px;top:147px;width:16px;height:16px;background:#f4f4f4;border:1px solid #151515"><svg width="14" height="14" viewBox="0 0 14 14" style="display:block"><text x="9" y="9.5" font-size="11" font-family="Liberation Sans" font-weight="bold" text-anchor="middle" fill="#3a3a3a" >A</text><text x="3.5" y="13" font-size="5.5" font-family="Liberation Sans" font-weight="normal" text-anchor="middle" fill="#3a3a3a" >A</text></svg></div>
<div class="a" style="left:218px;top:179px;width:16px;height:16px;background:#f4f4f4;border:1px solid #151515"><svg width="14" height="14" viewBox="0 0 14 14" style="display:block"><text x="7" y="12" font-size="13" font-family="Liberation Sans" font-weight="bold" text-anchor="middle" fill="#3a3a3a" >B</text></svg></div>
<div class="a" style="left:218px;top:203px;width:16px;height:16px;background:#f4f4f4;border:1px solid #151515"><svg width="14" height="14" viewBox="0 0 14 14" style="display:block"><text x="7" y="12.5" font-size="14" font-family="Liberation Serif" font-weight="bold" text-anchor="middle" fill="#3a3a3a" font-style="italic">i</text></svg></div>
<div class="a" style="left:218px;top:227px;width:16px;height:16px;background:#f4f4f4;border:1px solid #151515"><svg width="14" height="14" viewBox="0 0 14 14" style="display:block"><text x="7" y="12.2" font-size="16.5" font-family="Liberation Sans" font-weight="bold" text-anchor="middle" fill="#3a3a3a" font-style="italic">e</text></svg></div>
<div class="a" style="left:218px;top:251px;width:16px;height:16px;background:#f4f4f4;border:1px solid #151515"><svg width="14" height="14" viewBox="0 0 14 14" style="display:block"><path d="M2 3H12M2 6H8M2 9H12M2 12H8" stroke="#3a3a3a" stroke-width="1.4" fill="none"/></svg></div>
<div class="a" style="left:218px;top:275px;width:16px;height:16px;background:#f4f4f4;border:1px solid #151515"><svg width="14" height="14" viewBox="0 0 14 14" style="display:block"><path d="M2 3H12M4 6H10M2 9H12M4 12H10" stroke="#3a3a3a" stroke-width="1.4" fill="none"/></svg></div>
<div class="a" style="left:218px;top:299px;width:16px;height:16px;background:#f4f4f4;border:1px solid #151515"><svg width="14" height="14" viewBox="0 0 14 14" style="display:block"><path d="M2 3H12M6 6H12M2 9H12M6 12H12" stroke="#3a3a3a" stroke-width="1.4" fill="none"/></svg></div>
<div class="a" style="left:218px;top:331px;width:16px;height:16px;background:#f4f4f4;border:1px solid #151515"><svg width="14" height="14" viewBox="0 0 14 14" style="display:block"><path d="M11 3V8H3M5.5 5.5L3 8L5.5 10.5" stroke="#3a3a3a" stroke-width="1.6" fill="none"/></svg></div>
<div class="a" style="left:218px;top:363px;width:16px;height:16px;background:#f4f4f4;border:1px solid #151515"><svg width="14" height="14" viewBox="0 0 14 14" style="display:block"><text x="7" y="11.5" font-size="11" font-family="Liberation Sans" font-weight="bold" text-anchor="middle" fill="#3a3a3a" letter-spacing="-0.8">$$</text></svg></div>
<div class="a" style="left:218px;top:387px;width:16px;height:16px;background:#f4f4f4;border:1px solid #151515"><svg width="14" height="14" viewBox="0 0 14 14" style="display:block"><text x="4.5" y="8" font-size="10" font-family="Liberation Sans" font-weight="bold" text-anchor="middle" fill="#3a3a3a" >x</text><rect x="8.5" y="8.5" width="4" height="4" fill="none" stroke="#333" stroke-width="0.9"/></svg></div>
<div class="a" style="left:218px;top:411px;width:16px;height:16px;background:#f4f4f4;border:1px solid #151515"><svg width="14" height="14" viewBox="0 0 14 14" style="display:block"><text x="4.5" y="12.5" font-size="10" font-family="Liberation Sans" font-weight="bold" text-anchor="middle" fill="#3a3a3a" >x</text><rect x="8.5" y="1.5" width="4" height="4" fill="none" stroke="#333" stroke-width="0.9"/></svg></div>
<div class="a" style="left:218px;top:435px;width:16px;height:16px;background:#f4f4f4;border:1px solid #151515"><svg width="14" height="14" viewBox="0 0 14 14" style="display:block"><path d="M2 7H12" stroke="#3a3a3a" stroke-width="1.4" fill="none"/><rect x="6" y="2.5" width="2" height="2" fill="#222"/><rect x="6" y="9.5" width="2" height="2" fill="#222"/></svg></div>
<div class="a" style="left:218px;top:459px;width:16px;height:16px;background:#f4f4f4;border:1px solid #151515"><svg width="14" height="14" viewBox="0 0 14 14" style="display:block"><path d="M2 7H12" stroke="#3a3a3a" stroke-width="1.2" fill="none"/><rect x="5" y="1.5" width="4" height="3.5" fill="none" stroke="#333" stroke-width="0.9"/><rect x="5" y="9" width="4" height="3.5" fill="none" stroke="#333" stroke-width="0.9"/></svg></div>
<div class="a" style="left:218px;top:483px;width:16px;height:16px;background:#f4f4f4;border:1px solid #151515"><svg width="14" height="14" viewBox="0 0 14 14" style="display:block"><path d="M2 8L3.5 7L5.5 12L8 2.5H12.5" stroke="#3a3a3a" stroke-width="1.1" fill="none"/></svg></div>
<div class="a" style="left:220px;top:171px;width:12px;height:1px;background:#858585;"></div>
<div class="a" style="left:220px;top:323px;width:12px;height:1px;background:#858585;"></div>
<div class="a" style="left:220px;top:355px;width:12px;height:1px;background:#858585;"></div>
<svg class="a" style="left:218px;top:767px" width="16" height="12" viewBox="0 0 16 12"><path d="M1.5 6Q8 -1 14.5 6" stroke="#e0e0e0" stroke-width="1.3" fill="none"/><circle cx="8" cy="6.5" r="2.6" stroke="#e0e0e0" stroke-width="1.2" fill="none"/><path d="M8 5V7H9.5" stroke="#e0e0e0" stroke-width="1" fill="none"/></svg>
<svg class="a" style="left:220px;top:789px" width="12" height="18" viewBox="0 0 12 18"><path d="M2 1.5L10 9L2 16.5" stroke="#d0d0d0" stroke-width="1.3" fill="none"/></svg>
<svg class="a" style="left:220px;top:813px" width="12" height="18" viewBox="0 0 12 18"><path d="M10 1.5L2 9L10 16.5" stroke="#d0d0d0" stroke-width="1.3" fill="none"/></svg>
<svg class="a" style="left:219px;top:839px" width="14" height="14" viewBox="0 0 14 14"><circle cx="7" cy="7" r="6" stroke="#9a9a9a" stroke-width="1.1" fill="none"/><path d="M3.5 3.5L10.5 10.5M10.5 3.5L3.5 10.5" stroke="#9a9a9a" stroke-width="1.1"/></svg>
<div class="a" style="left:31px;top:92px;width:178px;height:780px;overflow:hidden">
<svg class="a" style="left:9px;top:8px" width="8" height="5" viewBox="0 0 8 5"><path d="M0 0H8L4 5Z" fill="#a8a8a8"/></svg>
<svg class="a" style="left:29px;top:1px" width="18" height="17" viewBox="0 0 18 17"><rect x="0" y="0" width="18" height="17" fill="#f6f6f6"/><path d="M0.6 1.2H10.5Q16.5 1.8 17 8.5V14.5Q17 16 14.5 16H12.5" fill="none" stroke="#6a6a6a" stroke-width="1.2"/><path d="M2.8 3.9H7.5Q11.8 4.5 12.2 9.5V16.5" fill="none" stroke="#8a8a8a" stroke-width="1.1"/><path d="M1.5 2.5V16" stroke="#c8c8c8" stroke-width="1"/></svg>
<div class="t" style="left:54px;top:4px;font-size:13px;color:#dcdcdc">D:\ADRIEN\Downloads\Programmations</div>
<div class="t" style="left:54px;top:21px;font-size:13px;color:#dcdcdc">LABELS</div>
<div class="t" style="left:54px;top:36px;font-size:13px;color:#dcdcdc">BLOCKS</div>
<div class="a" style="left:54px;top:52px;width:18px;height:17px"><svg width="18" height="17" viewBox="0 0 18 17" style="display:block"><rect x="0" y="0" width="18" height="17" fill="#f6f6f6"/><path d="M1 1.6H11.5Q16.6 2.2 17 8V16.6" fill="none" stroke="#7a7a7a" stroke-width="1.1"/><path d="M3 4.3H10Q14.6 4.8 15.2 9" fill="none" stroke="#9a9a9a" stroke-width="1"/><path d="M5 5.2V15.5" stroke="#8a8a8a" stroke-width="1"/><rect x="6" y="5.8" width="10.2" height="11" fill="#4a4a4a"/><rect x="7" y="6.6" width="8.2" height="4.2" fill="#c6d2e2"/><rect x="7" y="8.3" width="8.2" height="0.9" fill="#9aa8ba"/><rect x="8.3" y="12.2" width="5.6" height="4.3" fill="#8c8c8c"/><rect x="9.3" y="13.3" width="1.6" height="1.6" fill="#222"/></svg></div>
<div class="t" style="left:79px;top:54px;font-size:13px;color:#dcdcdc">./Chapitres/config</div>
<div class="a" style="left:54px;top:72px;width:18px;height:17px"><svg width="18" height="17" viewBox="0 0 18 17" style="display:block"><rect x="0" y="0" width="18" height="17" fill="#f6f6f6"/><path d="M1 1.6H11.5Q16.6 2.2 17 8V16.6" fill="none" stroke="#7a7a7a" stroke-width="1.1"/><path d="M3 4.3H10Q14.6 4.8 15.2 9" fill="none" stroke="#9a9a9a" stroke-width="1"/><path d="M5 5.2V15.5" stroke="#8a8a8a" stroke-width="1"/><rect x="6" y="5.8" width="10.2" height="11" fill="#4a4a4a"/><rect x="7" y="6.6" width="8.2" height="4.2" fill="#c6d2e2"/><rect x="7" y="8.3" width="8.2" height="0.9" fill="#9aa8ba"/><rect x="8.3" y="12.2" width="5.6" height="4.3" fill="#8c8c8c"/><rect x="9.3" y="13.3" width="1.6" height="1.6" fill="#222"/></svg></div>
<div class="t" style="left:79px;top:74px;font-size:13px;color:#dcdcdc">./Chapitres/page-garde</div>
<div class="a" style="left:54px;top:92px;width:18px;height:17px"><svg width="18" height="17" viewBox="0 0 18 17" style="display:block"><rect x="0" y="0" width="18" height="17" fill="#f6f6f6"/><path d="M1 1.6H11.5Q16.6 2.2 17 8V16.6" fill="none" stroke="#7a7a7a" stroke-width="1.1"/><path d="M3 4.3H10Q14.6 4.8 15.2 9" fill="none" stroke="#9a9a9a" stroke-width="1"/><path d="M5 5.2V15.5" stroke="#8a8a8a" stroke-width="1"/><rect x="6" y="5.8" width="10.2" height="11" fill="#4a4a4a"/><rect x="7" y="6.6" width="8.2" height="4.2" fill="#c6d2e2"/><rect x="7" y="8.3" width="8.2" height="0.9" fill="#9aa8ba"/><rect x="8.3" y="12.2" width="5.6" height="4.3" fill="#8c8c8c"/><rect x="9.3" y="13.3" width="1.6" height="1.6" fill="#222"/></svg></div>
<div class="t" style="left:79px;top:94px;font-size:13px;color:#dcdcdc">./Chapitres/intro</div>
<div class="a" style="left:54px;top:112px;width:18px;height:17px"><div style="width:18px;height:17px;background:#fafafa;border:1px solid #222;font:bold 15px/16px 'Liberation Sans';color:#262626;text-align:center">P</div></div>
<div class="t" style="left:79px;top:114px;font-size:13px;color:#dcdcdc">\LaTeX{} : histoire \&amp; premier contact</div>
<div class="a" style="left:54px;top:132px;width:18px;height:17px"><svg width="18" height="17" viewBox="0 0 18 17" style="display:block"><rect x="0" y="0" width="18" height="17" fill="#f6f6f6"/><path d="M1 1.6H11.5Q16.6 2.2 17 8V16.6" fill="none" stroke="#7a7a7a" stroke-width="1.1"/><path d="M3 4.3H10Q14.6 4.8 15.2 9" fill="none" stroke="#9a9a9a" stroke-width="1"/><path d="M5 5.2V15.5" stroke="#8a8a8a" stroke-width="1"/><rect x="6" y="5.8" width="10.2" height="11" fill="#4a4a4a"/><rect x="7" y="6.6" width="8.2" height="4.2" fill="#c6d2e2"/><rect x="7" y="8.3" width="8.2" height="0.9" fill="#9aa8ba"/><rect x="8.3" y="12.2" width="5.6" height="4.3" fill="#8c8c8c"/><rect x="9.3" y="13.3" width="1.6" height="1.6" fill="#222"/></svg></div>
<div class="t" style="left:79px;top:134px;font-size:13px;color:#dcdcdc">./Chapitres/p1-historique</div>
<div class="a" style="left:54px;top:152px;width:18px;height:17px"><svg width="18" height="17" viewBox="0 0 18 17" style="display:block"><rect x="0" y="0" width="18" height="17" fill="#f6f6f6"/><path d="M1 1.6H11.5Q16.6 2.2 17 8V16.6" fill="none" stroke="#7a7a7a" stroke-width="1.1"/><path d="M3 4.3H10Q14.6 4.8 15.2 9" fill="none" stroke="#9a9a9a" stroke-width="1"/><path d="M5 5.2V15.5" stroke="#8a8a8a" stroke-width="1"/><rect x="6" y="5.8" width="10.2" height="11" fill="#4a4a4a"/><rect x="7" y="6.6" width="8.2" height="4.2" fill="#c6d2e2"/><rect x="7" y="8.3" width="8.2" height="0.9" fill="#9aa8ba"/><rect x="8.3" y="12.2" width="5.6" height="4.3" fill="#8c8c8c"/><rect x="9.3" y="13.3" width="1.6" height="1.6" fill="#222"/></svg></div>
<div class="t" style="left:79px;top:154px;font-size:13px;color:#dcdcdc">./Chapitres/p1-installation</div>
<div class="a" style="left:54px;top:172px;width:18px;height:17px"><svg width="18" height="17" viewBox="0 0 18 17" style="display:block"><rect x="0" y="0" width="18" height="17" fill="#f6f6f6"/><path d="M1 1.6H11.5Q16.6 2.2 17 8V16.6" fill="none" stroke="#7a7a7a" stroke-width="1.1"/><path d="M3 4.3H10Q14.6 4.8 15.2 9" fill="none" stroke="#9a9a9a" stroke-width="1"/><path d="M5 5.2V15.5" stroke="#8a8a8a" stroke-width="1"/><rect x="6" y="5.8" width="10.2" height="11" fill="#4a4a4a"/><rect x="7" y="6.6" width="8.2" height="4.2" fill="#c6d2e2"/><rect x="7" y="8.3" width="8.2" height="0.9" fill="#9aa8ba"/><rect x="8.3" y="12.2" width="5.6" height="4.3" fill="#8c8c8c"/><rect x="9.3" y="13.3" width="1.6" height="1.6" fill="#222"/></svg></div>
<div class="t" style="left:79px;top:174px;font-size:13px;color:#dcdcdc">./Chapitres/p1-compilation</div>
<div class="a" style="left:54px;top:192px;width:18px;height:17px"><div style="width:18px;height:17px;background:#fafafa;border:1px solid #222;font:bold 15px/16px 'Liberation Sans';color:#262626;text-align:center">P</div></div>
<div class="t" style="left:79px;top:194px;font-size:13px;color:#dcdcdc">Débuter avec \LaTeX{}</div>
<div class="a" style="left:54px;top:212px;width:18px;height:17px"><svg width="18" height="17" viewBox="0 0 18 17" style="display:block"><rect x="0" y="0" width="18" height="17" fill="#f6f6f6"/><path d="M1 1.6H11.5Q16.6 2.2 17 8V16.6" fill="none" stroke="#7a7a7a" stroke-width="1.1"/><path d="M3 4.3H10Q14.6 4.8 15.2 9" fill="none" stroke="#9a9a9a" stroke-width="1"/><path d="M5 5.2V15.5" stroke="#8a8a8a" stroke-width="1"/><rect x="6" y="5.8" width="10.2" height="11" fill="#4a4a4a"/><rect x="7" y="6.6" width="8.2" height="4.2" fill="#c6d2e2"/><rect x="7" y="8.3" width="8.2" height="0.9" fill="#9aa8ba"/><rect x="8.3" y="12.2" width="5.6" height="4.3" fill="#8c8c8c"/><rect x="9.3" y="13.3" width="1.6" height="1.6" fill="#222"/></svg></div>
<div class="t" style="left:79px;top:214px;font-size:13px;color:#dcdcdc">./Chapitres/p2-regles</div>
<div class="a" style="left:54px;top:232px;width:18px;height:17px"><svg width="18" height="17" viewBox="0 0 18 17" style="display:block"><rect x="0" y="0" width="18" height="17" fill="#f6f6f6"/><path d="M1 1.6H11.5Q16.6 2.2 17 8V16.6" fill="none" stroke="#7a7a7a" stroke-width="1.1"/><path d="M3 4.3H10Q14.6 4.8 15.2 9" fill="none" stroke="#9a9a9a" stroke-width="1"/><path d="M5 5.2V15.5" stroke="#8a8a8a" stroke-width="1"/><rect x="6" y="5.8" width="10.2" height="11" fill="#4a4a4a"/><rect x="7" y="6.6" width="8.2" height="4.2" fill="#c6d2e2"/><rect x="7" y="8.3" width="8.2" height="0.9" fill="#9aa8ba"/><rect x="8.3" y="12.2" width="5.6" height="4.3" fill="#8c8c8c"/><rect x="9.3" y="13.3" width="1.6" height="1.6" fill="#222"/></svg></div>
<div class="t" style="left:79px;top:234px;font-size:13px;color:#dcdcdc">./Chapitres/p2-texte</div>
<div class="a" style="left:54px;top:252px;width:18px;height:17px"><svg width="18" height="17" viewBox="0 0 18 17" style="display:block"><rect x="0" y="0" width="18" height="17" fill="#f6f6f6"/><path d="M1 1.6H11.5Q16.6 2.2 17 8V16.6" fill="none" stroke="#7a7a7a" stroke-width="1.1"/><path d="M3 4.3H10Q14.6 4.8 15.2 9" fill="none" stroke="#9a9a9a" stroke-width="1"/><path d="M5 5.2V15.5" stroke="#8a8a8a" stroke-width="1"/><rect x="6" y="5.8" width="10.2" height="11" fill="#4a4a4a"/><rect x="7" y="6.6" width="8.2" height="4.2" fill="#c6d2e2"/><rect x="7" y="8.3" width="8.2" height="0.9" fill="#9aa8ba"/><rect x="8.3" y="12.2" width="5.6" height="4.3" fill="#8c8c8c"/><rect x="9.3" y="13.3" width="1.6" height="1.6" fill="#222"/></svg></div>
<div class="t" style="left:79px;top:254px;font-size:13px;color:#dcdcdc">./Chapitres/p2-maths</div>
<div class="a" style="left:54px;top:272px;width:18px;height:17px"><svg width="18" height="17" viewBox="0 0 18 17" style="display:block"><rect x="0" y="0" width="18" height="17" fill="#f6f6f6"/><path d="M1 1.6H11.5Q16.6 2.2 17 8V16.6" fill="none" stroke="#7a7a7a" stroke-width="1.1"/><path d="M3 4.3H10Q14.6 4.8 15.2 9" fill="none" stroke="#9a9a9a" stroke-width="1"/><path d="M5 5.2V15.5" stroke="#8a8a8a" stroke-width="1"/><rect x="6" y="5.8" width="10.2" height="11" fill="#4a4a4a"/><rect x="7" y="6.6" width="8.2" height="4.2" fill="#c6d2e2"/><rect x="7" y="8.3" width="8.2" height="0.9" fill="#9aa8ba"/><rect x="8.3" y="12.2" width="5.6" height="4.3" fill="#8c8c8c"/><rect x="9.3" y="13.3" width="1.6" height="1.6" fill="#222"/></svg></div>
<div class="t" style="left:79px;top:274px;font-size:13px;color:#dcdcdc">./Chapitres/p2-tableaux</div>
<div class="a" style="left:54px;top:292px;width:18px;height:17px"><svg width="18" height="17" viewBox="0 0 18 17" style="display:block"><rect x="0" y="0" width="18" height="17" fill="#f6f6f6"/><path d="M1 1.6H11.5Q16.6 2.2 17 8V16.6" fill="none" stroke="#7a7a7a" stroke-width="1.1"/><path d="M3 4.3H10Q14.6 4.8 15.2 9" fill="none" stroke="#9a9a9a" stroke-width="1"/><path d="M5 5.2V15.5" stroke="#8a8a8a" stroke-width="1"/><rect x="6" y="5.8" width="10.2" height="11" fill="#4a4a4a"/><rect x="7" y="6.6" width="8.2" height="4.2" fill="#c6d2e2"/><rect x="7" y="8.3" width="8.2" height="0.9" fill="#9aa8ba"/><rect x="8.3" y="12.2" width="5.6" height="4.3" fill="#8c8c8c"/><rect x="9.3" y="13.3" width="1.6" height="1.6" fill="#222"/></svg></div>
<div class="t" style="left:79px;top:294px;font-size:13px;color:#dcdcdc">./Chapitres/p2-images</div>
<div class="a" style="left:54px;top:312px;width:18px;height:17px"><svg width="18" height="17" viewBox="0 0 18 17" style="display:block"><rect x="0" y="0" width="18" height="17" fill="#f6f6f6"/><path d="M1 1.6H11.5Q16.6 2.2 17 8V16.6" fill="none" stroke="#7a7a7a" stroke-width="1.1"/><path d="M3 4.3H10Q14.6 4.8 15.2 9" fill="none" stroke="#9a9a9a" stroke-width="1"/><path d="M5 5.2V15.5" stroke="#8a8a8a" stroke-width="1"/><rect x="6" y="5.8" width="10.2" height="11" fill="#4a4a4a"/><rect x="7" y="6.6" width="8.2" height="4.2" fill="#c6d2e2"/><rect x="7" y="8.3" width="8.2" height="0.9" fill="#9aa8ba"/><rect x="8.3" y="12.2" width="5.6" height="4.3" fill="#8c8c8c"/><rect x="9.3" y="13.3" width="1.6" height="1.6" fill="#222"/></svg></div>
<div class="t" style="left:79px;top:314px;font-size:13px;color:#dcdcdc">./Chapitres/p2-erreurs</div>
<div class="a" style="left:54px;top:332px;width:18px;height:17px"><div style="width:18px;height:17px;background:#fafafa;border:1px solid #222;font:bold 15px/16px 'Liberation Sans';color:#262626;text-align:center">P</div></div>
<div class="t" style="left:79px;top:334px;font-size:13px;color:#dcdcdc">Aller plus loin avec \LaTeX{}</div>
<div class="a" style="left:54px;top:352px;width:18px;height:17px"><svg width="18" height="17" viewBox="0 0 18 17" style="display:block"><rect x="0" y="0" width="18" height="17" fill="#f6f6f6"/><path d="M1 1.6H11.5Q16.6 2.2 17 8V16.6" fill="none" stroke="#7a7a7a" stroke-width="1.1"/><path d="M3 4.3H10Q14.6 4.8 15.2 9" fill="none" stroke="#9a9a9a" stroke-width="1"/><path d="M5 5.2V15.5" stroke="#8a8a8a" stroke-width="1"/><rect x="6" y="5.8" width="10.2" height="11" fill="#4a4a4a"/><rect x="7" y="6.6" width="8.2" height="4.2" fill="#c6d2e2"/><rect x="7" y="8.3" width="8.2" height="0.9" fill="#9aa8ba"/><rect x="8.3" y="12.2" width="5.6" height="4.3" fill="#8c8c8c"/><rect x="9.3" y="13.3" width="1.6" height="1.6" fill="#222"/></svg></div>
<div class="t" style="left:79px;top:354px;font-size:13px;color:#dcdcdc">./Chapitres/p3-introduction</div>
<div class="a" style="left:54px;top:372px;width:18px;height:17px"><svg width="18" height="17" viewBox="0 0 18 17" style="display:block"><rect x="0" y="0" width="18" height="17" fill="#f6f6f6"/><path d="M1 1.6H11.5Q16.6 2.2 17 8V16.6" fill="none" stroke="#7a7a7a" stroke-width="1.1"/><path d="M3 4.3H10Q14.6 4.8 15.2 9" fill="none" stroke="#9a9a9a" stroke-width="1"/><path d="M5 5.2V15.5" stroke="#8a8a8a" stroke-width="1"/><rect x="6" y="5.8" width="10.2" height="11" fill="#4a4a4a"/><rect x="7" y="6.6" width="8.2" height="4.2" fill="#c6d2e2"/><rect x="7" y="8.3" width="8.2" height="0.9" fill="#9aa8ba"/><rect x="8.3" y="12.2" width="5.6" height="4.3" fill="#8c8c8c"/><rect x="9.3" y="13.3" width="1.6" height="1.6" fill="#222"/></svg></div>
<div class="t" style="left:79px;top:374px;font-size:13px;color:#dcdcdc">./Chapitres/p3-mode</div>
<div class="a" style="left:54px;top:392px;width:18px;height:17px"><svg width="18" height="17" viewBox="0 0 18 17" style="display:block"><rect x="0" y="0" width="18" height="17" fill="#f6f6f6"/><path d="M1 1.6H11.5Q16.6 2.2 17 8V16.6" fill="none" stroke="#7a7a7a" stroke-width="1.1"/><path d="M3 4.3H10Q14.6 4.8 15.2 9" fill="none" stroke="#9a9a9a" stroke-width="1"/><path d="M5 5.2V15.5" stroke="#8a8a8a" stroke-width="1"/><rect x="6" y="5.8" width="10.2" height="11" fill="#4a4a4a"/><rect x="7" y="6.6" width="8.2" height="4.2" fill="#c6d2e2"/><rect x="7" y="8.3" width="8.2" height="0.9" fill="#9aa8ba"/><rect x="8.3" y="12.2" width="5.6" height="4.3" fill="#8c8c8c"/><rect x="9.3" y="13.3" width="1.6" height="1.6" fill="#222"/></svg></div>
<div class="t" style="left:79px;top:394px;font-size:13px;color:#dcdcdc">./Chapitres/p3-texte</div>
<div class="a" style="left:54px;top:412px;width:18px;height:17px"><svg width="18" height="17" viewBox="0 0 18 17" style="display:block"><rect x="0" y="0" width="18" height="17" fill="#f6f6f6"/><path d="M1 1.6H11.5Q16.6 2.2 17 8V16.6" fill="none" stroke="#7a7a7a" stroke-width="1.1"/><path d="M3 4.3H10Q14.6 4.8 15.2 9" fill="none" stroke="#9a9a9a" stroke-width="1"/><path d="M5 5.2V15.5" stroke="#8a8a8a" stroke-width="1"/><rect x="6" y="5.8" width="10.2" height="11" fill="#4a4a4a"/><rect x="7" y="6.6" width="8.2" height="4.2" fill="#c6d2e2"/><rect x="7" y="8.3" width="8.2" height="0.9" fill="#9aa8ba"/><rect x="8.3" y="12.2" width="5.6" height="4.3" fill="#8c8c8c"/><rect x="9.3" y="13.3" width="1.6" height="1.6" fill="#222"/></svg></div>
<div class="t" style="left:79px;top:414px;font-size:13px;color:#dcdcdc">./Chapitres/p3-maths</div>
<div class="a" style="left:54px;top:432px;width:18px;height:17px"><svg width="18" height="17" viewBox="0 0 18 17" style="display:block"><rect x="0" y="0" width="18" height="17" fill="#f6f6f6"/><path d="M1 1.6H11.5Q16.6 2.2 17 8V16.6" fill="none" stroke="#7a7a7a" stroke-width="1.1"/><path d="M3 4.3H10Q14.6 4.8 15.2 9" fill="none" stroke="#9a9a9a" stroke-width="1"/><path d="M5 5.2V15.5" stroke="#8a8a8a" stroke-width="1"/><rect x="6" y="5.8" width="10.2" height="11" fill="#4a4a4a"/><rect x="7" y="6.6" width="8.2" height="4.2" fill="#c6d2e2"/><rect x="7" y="8.3" width="8.2" height="0.9" fill="#9aa8ba"/><rect x="8.3" y="12.2" width="5.6" height="4.3" fill="#8c8c8c"/><rect x="9.3" y="13.3" width="1.6" height="1.6" fill="#222"/></svg></div>
<div class="t" style="left:79px;top:434px;font-size:13px;color:#dcdcdc">./Chapitres/p3-tableaux</div>
<div class="a" style="left:54px;top:452px;width:18px;height:17px"><svg width="18" height="17" viewBox="0 0 18 17" style="display:block"><rect x="0" y="0" width="18" height="17" fill="#f6f6f6"/><path d="M1 1.6H11.5Q16.6 2.2 17 8V16.6" fill="none" stroke="#7a7a7a" stroke-width="1.1"/><path d="M3 4.3H10Q14.6 4.8 15.2 9" fill="none" stroke="#9a9a9a" stroke-width="1"/><path d="M5 5.2V15.5" stroke="#8a8a8a" stroke-width="1"/><rect x="6" y="5.8" width="10.2" height="11" fill="#4a4a4a"/><rect x="7" y="6.6" width="8.2" height="4.2" fill="#c6d2e2"/><rect x="7" y="8.3" width="8.2" height="0.9" fill="#9aa8ba"/><rect x="8.3" y="12.2" width="5.6" height="4.3" fill="#8c8c8c"/><rect x="9.3" y="13.3" width="1.6" height="1.6" fill="#222"/></svg></div>
<div class="t" style="left:79px;top:454px;font-size:13px;color:#dcdcdc">./Chapitres/p3-images</div>
<div class="a" style="left:54px;top:472px;width:18px;height:17px"><svg width="18" height="17" viewBox="0 0 18 17" style="display:block"><rect x="0" y="0" width="18" height="17" fill="#f6f6f6"/><path d="M1 1.6H11.5Q16.6 2.2 17 8V16.6" fill="none" stroke="#7a7a7a" stroke-width="1.1"/><path d="M3 4.3H10Q14.6 4.8 15.2 9" fill="none" stroke="#9a9a9a" stroke-width="1"/><path d="M5 5.2V15.5" stroke="#8a8a8a" stroke-width="1"/><rect x="6" y="5.8" width="10.2" height="11" fill="#4a4a4a"/><rect x="7" y="6.6" width="8.2" height="4.2" fill="#c6d2e2"/><rect x="7" y="8.3" width="8.2" height="0.9" fill="#9aa8ba"/><rect x="8.3" y="12.2" width="5.6" height="4.3" fill="#8c8c8c"/><rect x="9.3" y="13.3" width="1.6" height="1.6" fill="#222"/></svg></div>
<div class="t" style="left:79px;top:474px;font-size:13px;color:#dcdcdc">./Chapitres/p3-TikZ</div>
<div class="a" style="left:54px;top:492px;width:18px;height:17px"><svg width="18" height="17" viewBox="0 0 18 17" style="display:block"><rect x="0" y="0" width="18" height="17" fill="#f6f6f6"/><path d="M1 1.6H11.5Q16.6 2.2 17 8V16.6" fill="none" stroke="#7a7a7a" stroke-width="1.1"/><path d="M3 4.3H10Q14.6 4.8 15.2 9" fill="none" stroke="#9a9a9a" stroke-width="1"/><path d="M5 5.2V15.5" stroke="#8a8a8a" stroke-width="1"/><rect x="6" y="5.8" width="10.2" height="11" fill="#4a4a4a"/><rect x="7" y="6.6" width="8.2" height="4.2" fill="#c6d2e2"/><rect x="7" y="8.3" width="8.2" height="0.9" fill="#9aa8ba"/><rect x="8.3" y="12.2" width="5.6" height="4.3" fill="#8c8c8c"/><rect x="9.3" y="13.3" width="1.6" height="1.6" fill="#222"/></svg></div>
<div class="t" style="left:79px;top:494px;font-size:13px;color:#dcdcdc">./Chapitres/p3-beamer</div>
<div class="a" style="left:54px;top:512px;width:18px;height:17px"><div style="width:18px;height:17px;background:#fafafa;border:1px solid #222;font:bold 15px/16px 'Liberation Sans';color:#262626;text-align:center">P</div></div>
<div class="t" style="left:79px;top:514px;font-size:13px;color:#dcdcdc">Annexes</div>
<div class="a" style="left:54px;top:532px;width:18px;height:17px"><svg width="18" height="17" viewBox="0 0 18 17" style="display:block"><rect x="0" y="0" width="18" height="17" fill="#f6f6f6"/><path d="M1 1.6H11.5Q16.6 2.2 17 8V16.6" fill="none" stroke="#7a7a7a" stroke-width="1.1"/><path d="M3 4.3H10Q14.6 4.8 15.2 9" fill="none" stroke="#9a9a9a" stroke-width="1"/><path d="M5 5.2V15.5" stroke="#8a8a8a" stroke-width="1"/><rect x="6" y="5.8" width="10.2" height="11" fill="#4a4a4a"/><rect x="7" y="6.6" width="8.2" height="4.2" fill="#c6d2e2"/><rect x="7" y="8.3" width="8.2" height="0.9" fill="#9aa8ba"/><rect x="8.3" y="12.2" width="5.6" height="4.3" fill="#8c8c8c"/><rect x="9.3" y="13.3" width="1.6" height="1.6" fill="#222"/></svg></div>
<div class="t" style="left:79px;top:534px;font-size:13px;color:#dcdcdc">./Chapitres/annexes</div>
</div>
<div class="a" style="left:1207px;top:92px;width:35px;height:883px;background:#2d2d2d;"></div>
<div class="a" style="left:1207px;top:92px;width:35px;height:15px;background:#6e6e6e;"></div>
<div class="t" style="left:1211px;top:93px;font-size:13px;color:#d4d0c4;">1</div>
<div class="t" style="left:1211px;top:108px;font-size:13px;color:#d4d0c4;">2</div>
<div class="t" style="left:1211px;top:123px;font-size:13px;color:#d4d0c4;">3</div>
<div class="t" style="left:1211px;top:138px;font-size:13px;color:#d4d0c4;">4</div>
<div class="t" style="left:1211px;top:153px;font-size:13px;color:#d4d0c4;">5</div>
<div class="t" style="left:1211px;top:168px;font-size:13px;color:#d4d0c4;">6</div>
<div class="t" style="left:1211px;top:183px;font-size:13px;color:#d4d0c4;">7</div>
<div class="t" style="left:1211px;top:198px;font-size:13px;color:#d4d0c4;">8</div>
<div class="t" style="left:1211px;top:213px;font-size:13px;color:#d4d0c4;">9</div>
<div class="t" style="left:1211px;top:228px;font-size:13px;color:#d4d0c4;">10</div>
<div class="t" style="left:1211px;top:243px;font-size:13px;color:#d4d0c4;">11</div>
<div class="t" style="left:1211px;top:258px;font-size:13px;color:#d4d0c4;">12</div>
<div class="t" style="left:1211px;top:273px;font-size:13px;color:#d4d0c4;">13</div>
<div class="t" style="left:1211px;top:288px;font-size:13px;color:#d4d0c4;">14</div>
<div class="t" style="left:1211px;top:303px;font-size:13px;color:#d4d0c4;">15</div>
<div class="t" style="left:1211px;top:318px;font-size:13px;color:#d4d0c4;">16</div>
<div class="t" style="left:1211px;top:333px;font-size:13px;color:#d4d0c4;">17</div>
<div class="t" style="left:1211px;top:348px;font-size:13px;color:#d4d0c4;">18</div>
<div class="t" style="left:1211px;top:363px;font-size:13px;color:#d4d0c4;">19</div>
<div class="t" style="left:1211px;top:378px;font-size:13px;color:#d4d0c4;">20</div>
<div class="t" style="left:1211px;top:393px;font-size:13px;color:#d4d0c4;">21</div>
<div class="t" style="left:1211px;top:408px;font-size:13px;color:#d4d0c4;">22</div>
<div class="t" style="left:1211px;top:423px;font-size:13px;color:#d4d0c4;">23</div>
<div class="t" style="left:1211px;top:438px;font-size:13px;color:#d4d0c4;">24</div>
<div class="t" style="left:1211px;top:453px;font-size:13px;color:#d4d0c4;">25</div>
<div class="t" style="left:1211px;top:468px;font-size:13px;color:#d4d0c4;">26</div>
<div class="t" style="left:1211px;top:483px;font-size:13px;color:#d4d0c4;">27</div>
<div class="t" style="left:1211px;top:498px;font-size:13px;color:#d4d0c4;">28</div>
<div class="t" style="left:1211px;top:513px;font-size:13px;color:#d4d0c4;">29</div>
<div class="t" style="left:1211px;top:528px;font-size:13px;color:#d4d0c4;">30</div>
<div class="t" style="left:1211px;top:543px;font-size:13px;color:#d4d0c4;">31</div>
<div class="t" style="left:1211px;top:558px;font-size:13px;color:#d4d0c4;">32</div>
<div class="t" style="left:1211px;top:573px;font-size:13px;color:#d4d0c4;">33</div>
<div class="t" style="left:1211px;top:588px;font-size:13px;color:#d4d0c4;">34</div>
<div class="t" style="left:1211px;top:603px;font-size:13px;color:#d4d0c4;">35</div>
<div class="t" style="left:1211px;top:618px;font-size:13px;color:#d4d0c4;">36</div>
<div class="t" style="left:1211px;top:633px;font-size:13px;color:#d4d0c4;">37</div>
<div class="t" style="left:1211px;top:648px;font-size:13px;color:#d4d0c4;">38</div>
<div class="t" style="left:1211px;top:663px;font-size:13px;color:#d4d0c4;">39</div>
<div class="t" style="left:1211px;top:678px;font-size:13px;color:#d4d0c4;">40</div>
<div class="t" style="left:1211px;top:693px;font-size:13px;color:#d4d0c4;">41</div>
<div class="t" style="left:1211px;top:708px;font-size:13px;color:#d4d0c4;">42</div>
<div class="t" style="left:1211px;top:723px;font-size:13px;color:#d4d0c4;">43</div>
<div class="t" style="left:1211px;top:738px;font-size:13px;color:#d4d0c4;">44</div>
<div class="t" style="left:1211px;top:753px;font-size:13px;color:#d4d0c4;">45</div>
<div class="t" style="left:1211px;top:768px;font-size:13px;color:#d4d0c4;">46</div>
<div class="t" style="left:1211px;top:783px;font-size:13px;color:#d4d0c4;">47</div>
<div class="t" style="left:1211px;top:798px;font-size:13px;color:#d4d0c4;">48</div>
<div class="t" style="left:1211px;top:813px;font-size:13px;color:#d4d0c4;">49</div>
<div class="t" style="left:1211px;top:828px;font-size:13px;color:#d4d0c4;">50</div>
<div class="t" style="left:1211px;top:843px;font-size:13px;color:#d4d0c4;">51</div>
<div class="t" style="left:1211px;top:858px;font-size:13px;color:#d4d0c4;">52</div>
<div class="t" style="left:1211px;top:873px;font-size:13px;color:#d4d0c4;">53</div>
<div class="t" style="left:1211px;top:888px;font-size:13px;color:#d4d0c4;">54</div>
<div class="t" style="left:1211px;top:903px;font-size:13px;color:#d4d0c4;">55</div>
<div class="t" style="left:1211px;top:918px;font-size:13px;color:#d4d0c4;">56</div>
<div class="t" style="left:1211px;top:933px;font-size:13px;color:#d4d0c4;">57</div>
<div class="t" style="left:1211px;top:948px;font-size:13px;color:#d4d0c4;">58</div>
<div class="t" style="left:1211px;top:963px;font-size:13px;color:#d4d0c4;">59</div>
<div class="a" style="left:1190px;top:92px;width:17px;height:666px;background:#e6e6e6;"></div>
<div class="a" style="left:1190px;top:92px;width:1px;height:666px;background:#d4d4d4;"></div>
<div class="a" style="left:1191px;top:108px;width:16px;height:200px;background:linear-gradient(90deg,#fdfdfd,#f0f0f0);border-bottom:1px solid #c8c8c8"></div>
<div class="a" style="left:1191px;top:92px;width:16px;height:17px;background:linear-gradient(90deg,#fdfdfd,#f0f0f0);border-bottom:1px solid #cfcfcf"></div>
<svg class="a" style="left:1195px;top:99px;overflow:visible" width="8" height="4" viewBox="0 0 8 4"><path d="M0 4H8L4 0Z" fill="#555"/></svg>
<div class="a" style="left:1191px;top:741px;width:16px;height:17px;background:linear-gradient(90deg,#fdfdfd,#f0f0f0);border-top:1px solid #cfcfcf"></div>
<svg class="a" style="left:1195px;top:748px;overflow:visible" width="8" height="4" viewBox="0 0 8 4"><path d="M0 0H8L4 4Z" fill="#555"/></svg>
<div class="a" style="left:1242px;top:92px;width:17px;height:883px;background:#e6e6e6;"></div>
<div class="a" style="left:1242px;top:92px;width:1px;height:883px;background:#d4d4d4;"></div>
<div class="a" style="left:1243px;top:108px;width:16px;height:229px;background:linear-gradient(90deg,#fdfdfd,#f0f0f0);border-bottom:1px solid #c8c8c8"></div>
<div class="a" style="left:1243px;top:92px;width:16px;height:17px;background:linear-gradient(90deg,#fdfdfd,#f0f0f0);border-bottom:1px solid #cfcfcf"></div>
<svg class="a" style="left:1247px;top:99px;overflow:visible" width="8" height="4" viewBox="0 0 8 4"><path d="M0 4H8L4 0Z" fill="#555"/></svg>
<div class="a" style="left:1243px;top:958px;width:16px;height:17px;background:linear-gradient(90deg,#fdfdfd,#f0f0f0);border-top:1px solid #cfcfcf"></div>
<svg class="a" style="left:1247px;top:965px;overflow:visible" width="8" height="4" viewBox="0 0 8 4"><path d="M0 0H8L4 4Z" fill="#555"/></svg>
<div class="a" style="left:1259px;top:92px;width:659px;height:883px;background:#808080;"></div>
<div class="a" style="left:1259px;top:92px;width:1px;height:883px;background:#000;"></div>
<div class="a" style="left:1259px;top:92px;width:659px;height:1px;background:#111;"></div>
<div class="a" style="left:1267px;top:98px;width:624px;height:870px;background:#fff;border:1px solid #000;overflow:hidden">
<svg class="a" style="left:0;top:0" width="623" height="868" viewBox="1268 99 623 868">
<path d="M1268 99H1577.5L1268 406.5Z" fill="#002395"/>
<path d="M1891 662L1891 968L1587 968Z" fill="#ed2939"/>
<path d="M1428.1 675.1L1379.2 768.2H1440.3L1390.3 851.6H1440.3L1366.9 950.3L1406.8 869.2H1349.3L1399.1 786.7H1368.3L1352.7 808.6H1374L1341.3 857.8L1352.1 826H1320Z" fill="#3dc1ea"/>
<path d="M1315 612V446" stroke="#333" stroke-width="1.2"/><path d="M1312.8 449.5L1315 444.5L1317.2 449.5" fill="none" stroke="#333" stroke-width="0.9"/>
<path d="M1315 612H1517" stroke="#333" stroke-width="1.2"/><path d="M1513.5 609.8L1518.5 612L1513.5 614.2" fill="none" stroke="#333" stroke-width="0.9"/>
<path d="M1315 465.5H1502" stroke="#ec1c24" stroke-width="1.6"/>
<path d="M1315 590Q1400 572 1502 506.5" fill="none" stroke="#00a651" stroke-width="1.6"/>
<path d="M1316 611.5Q1385 606 1396 560Q1404 520 1409 466" fill="none" stroke="#f7941d" stroke-width="1.5" stroke-dasharray="3.2 2.4"/>
</svg>
<div class="t" style="left:214.96px;top:168.82px;font-size:42.71px;color:#000;font-family:'Liberation Serif';font-weight:bold;transform-origin:0 0;transform:scaleX(1.2037);-webkit-text-stroke:0.8px #fff">Initiation</div>
<div class="t" style="left:437.36px;top:167.68px;font-size:43.71px;color:#000;font-family:'Liberation Serif';font-weight:bold;transform-origin:0 0;transform:scaleX(1.1743);-webkit-text-stroke:0.8px #fff">à</div>
<div class="t" style="left:479.65px;top:166.14px;font-size:46.46px;color:#000;font-family:'Liberation Serif';font-weight:bold;transform-origin:0 0;transform:scaleX(0.9147);-webkit-text-stroke:0.8px #fff">L</div>
<div class="t" style="left:492.66px;top:167.46px;font-size:32.58px;color:#000;font-family:'Liberation Serif';font-weight:bold;transform-origin:0 0;transform:scaleX(1.0393);-webkit-text-stroke:0.8px #fff">A</div>
<div class="t" style="left:511.51px;top:166.14px;font-size:46.46px;color:#000;font-family:'Liberation Serif';font-weight:bold;transform-origin:0 0;transform:scaleX(1.0693);-webkit-text-stroke:0.8px #fff">T</div>
<div class="t" style="left:537.55px;top:175.21px;font-size:46.62px;color:#000;font-family:'Liberation Serif';font-weight:bold;transform-origin:0 0;transform:scaleX(1.019);-webkit-text-stroke:0.8px #fff">E</div>
<div class="t" style="left:564.58px;top:166.14px;font-size:46.46px;color:#000;font-family:'Liberation Serif';font-weight:bold;transform-origin:0 0;transform:scaleX(1.1011);-webkit-text-stroke:0.8px #fff">X</div>
<div class="t" style="left:272.43px;top:222.31px;font-size:32.98px;color:#111;font-family:'Liberation Mono';transform-origin:0 0;transform:scaleX(0.9833);-webkit-text-stroke:0.7px #111">guide-latex-fr</div>
<div class="t" style="left:309.10px;top:289.24px;font-size:26.14px;color:#111;font-family:'Liberation Serif';font-style:italic;transform-origin:0 0;transform:scaleX(1.0461);-webkit-text-stroke:0.35px #fff">Pour débutants ou</div>
<div class="t" style="left:311.03px;top:321.52px;font-size:24.89px;color:#111;font-family:'Liberation Serif';font-style:italic;transform-origin:0 0;transform:scaleX(1.0974);-webkit-text-stroke:0.35px #fff">jeunes utilisateurs</div>
<div class="t" style="left:281.97px;top:398.52px;font-size:26.29px;color:#111;font-family:'Liberation Serif';transform-origin:0 0;transform:scaleX(1.0497);-webkit-text-stroke:0.3px #fff">Par Adrien B<span style="font-size:80%">OUZIGUES</span></div>
<div class="t" style="left:305.59px;top:426.71px;font-size:25.74px;color:#000;font-family:'Liberation Sans';transform-origin:0 0;transform:scaleX(0.9102);-webkit-text-stroke:0.35px #000">Indignation 13 4215</div>
<div class="t" style="left:357.21px;top:507.16px;font-size:17.44px;color:#222;font-family:'Liberation Serif';transform-origin:0 0;transform:scaleX(1.01);">13 juillet 2016</div>
<div class="t" style="left:310.99px;top:531.29px;font-size:17.22px;color:#000;font-family:'Liberation Serif';font-weight:bold;transform-origin:0 0;transform:scaleX(1.2147);">Version 3.0 à jour au :</div>
<div class="t" style="left:329.87px;top:554.12px;font-size:17.75px;color:#000;font-family:'Liberation Serif';font-weight:bold;transform-origin:0 0;transform:scaleX(1.1627);">25 décembre 2018</div>
<div class="t" style="left:92.87px;top:348.46px;font-size:12.83px;color:#ec1c24;font-family:'Liberation Serif';transform-origin:0 0;transform:scaleX(1.0326);">Impossible à faire</div>
<div class="t" style="left:64.15px;top:517.16px;font-size:13.11px;color:#222;font-family:'Liberation Serif';transform-origin:0 0;transform:scaleX(1.0402);">Complexité et taille du rapport</div>
<div class="t" style="left:100.50px;top:417.35px;font-size:12.54px;color:#f7941d;font-family:'Liberation Serif';transform-origin:0 0;transform:scaleX(1.0455);">Word</div>
<div class="t" style="left:27.63px;top:486.60px;font-size:11.41px;color:#222;font-family:'Liberation Serif';transform-origin:0 0;transform:rotate(-90deg) scaleX(1.1744);">Effort et temps requis</div>
<div class="t" style="left:184.99px;top:444.93px;font-size:11.50px;color:#00a651;font-family:'Liberation Serif';transform-origin:0 0;transform:scaleX(0.9147)">L</div>
<div class="t" style="left:188.21px;top:445.26px;font-size:8.06px;color:#00a651;font-family:'Liberation Serif';transform-origin:0 0;transform:scaleX(1.0393)">A</div>
<div class="t" style="left:192.88px;top:444.93px;font-size:11.50px;color:#00a651;font-family:'Liberation Serif';transform-origin:0 0;transform:scaleX(1.0693)">T</div>
<div class="t" style="left:199.32px;top:447.18px;font-size:11.54px;color:#00a651;font-family:'Liberation Serif';transform-origin:0 0;transform:scaleX(1.019)">E</div>
<div class="t" style="left:206.01px;top:444.93px;font-size:11.50px;color:#00a651;font-family:'Liberation Serif';transform-origin:0 0;transform:scaleX(1.1011)">X</div>
</div>
<div class="a" style="left:1901px;top:92px;width:17px;height:866px;background:#e6e6e6;"></div>
<div class="a" style="left:1901px;top:92px;width:1px;height:866px;background:#d4d4d4;"></div>
<div class="a" style="left:1902px;top:109px;width:16px;height:33px;background:linear-gradient(90deg,#fdfdfd,#f0f0f0);border-bottom:1px solid #c8c8c8"></div>
<div class="a" style="left:1902px;top:92px;width:16px;height:17px;background:linear-gradient(90deg,#fdfdfd,#f0f0f0);border-bottom:1px solid #cfcfcf"></div>
<svg class="a" style="left:1906px;top:99px;overflow:visible" width="8" height="4" viewBox="0 0 8 4"><path d="M0 4H8L4 0Z" fill="#555"/></svg>
<div class="a" style="left:1902px;top:941px;width:16px;height:17px;background:linear-gradient(90deg,#fdfdfd,#f0f0f0);border-top:1px solid #cfcfcf"></div>
<svg class="a" style="left:1906px;top:948px;overflow:visible" width="8" height="4" viewBox="0 0 8 4"><path d="M0 0H8L4 4Z" fill="#555"/></svg>
<div class="a" style="left:1260px;top:958px;width:641px;height:17px;background:#e6e6e6;"></div>
<div class="a" style="left:1260px;top:958px;width:641px;height:1px;background:#d4d4d4;"></div>
<div class="a" style="left:1362px;top:959px;width:438px;height:16px;background:linear-gradient(180deg,#fdfdfd,#f0f0f0);border-left:1px solid #c8c8c8;border-right:1px solid #c8c8c8"></div>
<div class="a" style="left:1260px;top:959px;width:16px;height:16px;background:linear-gradient(180deg,#fdfdfd,#f0f0f0);border-right:1px solid #cfcfcf"></div>
<svg class="a" style="left:1266px;top:963px;overflow:visible" width="4" height="8" viewBox="0 0 4 8"><path d="M4 0V8L0 4Z" fill="#555"/></svg>
<div class="a" style="left:1885px;top:959px;width:16px;height:16px;background:linear-gradient(180deg,#fdfdfd,#f0f0f0);border-left:1px solid #cfcfcf"></div>
<svg class="a" style="left:1891px;top:963px;overflow:visible" width="4" height="8" viewBox="0 0 4 8"><path d="M0 0V8L4 4Z" fill="#555"/></svg>
<div class="a" style="left:1901px;top:958px;width:17px;height:17px;background:#e6e6e6;"></div>
<div class="a" style="left:1259px;top:974px;width:659px;height:1px;background:#000;"></div>
<div class="a" style="left:242px;top:758px;width:948px;height:1px;background:#555;"></div>
<div class="a" style="left:242px;top:759px;width:948px;height:23px;background:linear-gradient(180deg,#fefefe,#ececec);border-bottom:1px solid #bdbdbd"></div>
<div class="a" style="left:242px;top:782px;width:948px;height:95px;background:#fff;"></div>
<div class="a" style="left:284px;top:759px;width:1px;height:118px;background:#cfcfcf;"></div>
<div class="a" style="left:485px;top:759px;width:1px;height:118px;background:#cfcfcf;"></div>
<div class="a" style="left:547px;top:759px;width:1px;height:118px;background:#cfcfcf;"></div>
<div class="a" style="left:606px;top:759px;width:1px;height:118px;background:#cfcfcf;"></div>
<div class="a" style="left:242px;top:802px;width:948px;height:1px;background:#d4d4d4;"></div>
<div class="a" style="left:242px;top:822px;width:948px;height:1px;background:#d4d4d4;"></div>
<div class="a" style="left:242px;top:842px;width:948px;height:1px;background:#d4d4d4;"></div>
<div class="a" style="left:242px;top:862px;width:948px;height:1px;background:#d4d4d4;"></div>
<div class="a" style="left:242px;top:759px;width:948px;height:118px;overflow:hidden">
<div class="t" style="left:46px;top:5px;font-size:15px;color:#000">File</div>
<div class="t" style="left:247px;top:5px;font-size:15px;color:#000">Type</div>
<div class="t" style="left:309px;top:5px;font-size:15px;color:#000">Line</div>
<div class="t" style="left:368px;top:5px;font-size:15px;color:#000">Message</div>
<div class="t" style="left:46px;top:26px;font-size:15px;color:#0000ff"></div>
<div class="t" style="left:247px;top:26px;font-size:15px;color:#0000ff">Warning</div>
<div class="t" style="left:309px;top:26px;font-size:15px;color:#0000ff">line 1</div>
<div class="t" style="left:368px;top:26px;font-size:15px;color:#0000ff;width:580px;overflow:hidden">running in backwards compatibility mode (unsuitable tick labels; missing features). Consider writing \pgfplotsset{compat=1.15} into your preamble.</div>
<div class="t" style="left:46px;top:46px;font-size:15px;color:#0000ff">Chapitres/page-garde.tex</div>
<div class="t" style="left:247px;top:46px;font-size:15px;color:#0000ff">Warning</div>
<div class="t" style="left:309px;top:46px;font-size:15px;color:#0000ff">line 20</div>
<div class="t" style="left:368px;top:46px;font-size:15px;color:#0000ff;width:580px;overflow:hidden">Font shape `U/rsfs/m/n&#x27; in size &lt;43&gt; not available(Font) size &lt;24.88&gt; substituted</div>
<div class="t" style="left:46px;top:66px;font-size:15px;color:#0000ff">Chapitres/page-garde.tex</div>
<div class="t" style="left:247px;top:66px;font-size:15px;color:#0000ff">Warning</div>
<div class="t" style="left:309px;top:66px;font-size:15px;color:#0000ff">line 20</div>
<div class="t" style="left:368px;top:66px;font-size:15px;color:#0000ff;width:580px;overflow:hidden">Font shape `U/rsfs/m/n&#x27; in size &lt;30.09987&gt; not available(Font) size &lt;24.88&gt; substituted</div>
<div class="t" style="left:46px;top:86px;font-size:15px;color:#0000ff">Chapitres/page-garde.tex</div>
<div class="t" style="left:247px;top:86px;font-size:15px;color:#0000ff">Warning</div>
<div class="t" style="left:309px;top:86px;font-size:15px;color:#0000ff">line 20</div>
<div class="t" style="left:368px;top:86px;font-size:15px;color:#0000ff;width:580px;overflow:hidden">Font shape `U/rsfs/m/n&#x27; in size &lt;21.5&gt; not available(Font) size &lt;20.74&gt; substituted</div>
<div class="t" style="left:46px;top:106px;font-size:15px;color:#0000ff">Chapitres/page-garde.tex</div>
<div class="t" style="left:247px;top:106px;font-size:15px;color:#0000ff">Warning</div>
<div class="t" style="left:309px;top:106px;font-size:15px;color:#0000ff">line 20</div>
<div class="t" style="left:368px;top:106px;font-size:15px;color:#0000ff;width:580px;overflow:hidden">Font shape `U/esvect/m/n&#x27; in size &lt;43&gt; not available(Font) size &lt;24.88&gt; substituted</div>
</div>
<div class="a" style="left:1190px;top:759px;width:17px;height:119px;background:#e6e6e6;"></div>
<div class="a" style="left:1190px;top:759px;width:1px;height:119px;background:#d4d4d4;"></div>
<div class="a" style="left:1191px;top:776px;width:16px;height:32px;background:linear-gradient(90deg,#fdfdfd,#f0f0f0);border-bottom:1px solid #c8c8c8"></div>
<div class="a" style="left:1191px;top:759px;width:16px;height:17px;background:linear-gradient(90deg,#fdfdfd,#f0f0f0);border-bottom:1px solid #cfcfcf"></div>
<svg class="a" style="left:1195px;top:766px;overflow:visible" width="8" height="4" viewBox="0 0 8 4"><path d="M0 4H8L4 0Z" fill="#555"/></svg>
<div class="a" style="left:1191px;top:861px;width:16px;height:17px;background:linear-gradient(90deg,#fdfdfd,#f0f0f0);border-top:1px solid #cfcfcf"></div>
<svg class="a" style="left:1195px;top:868px;overflow:visible" width="8" height="4" viewBox="0 0 8 4"><path d="M0 0H8L4 4Z" fill="#555"/></svg>
<div class="a" style="left:242px;top:877px;width:948px;height:17px;background:#e6e6e6;"></div>
<div class="a" style="left:242px;top:877px;width:948px;height:1px;background:#d4d4d4;"></div>
<div class="a" style="left:258px;top:878px;width:183px;height:16px;background:linear-gradient(180deg,#fdfdfd,#f0f0f0);border-left:1px solid #c8c8c8;border-right:1px solid #c8c8c8"></div>
<div class="a" style="left:242px;top:878px;width:16px;height:16px;background:linear-gradient(180deg,#fdfdfd,#f0f0f0);border-right:1px solid #cfcfcf"></div>
<svg class="a" style="left:248px;top:882px;overflow:visible" width="4" height="8" viewBox="0 0 4 8"><path d="M4 0V8L0 4Z" fill="#555"/></svg>
<div class="a" style="left:1174px;top:878px;width:16px;height:16px;background:linear-gradient(180deg,#fdfdfd,#f0f0f0);border-left:1px solid #cfcfcf"></div>
<svg class="a" style="left:1180px;top:882px;overflow:visible" width="4" height="8" viewBox="0 0 4 8"><path d="M0 0V8L4 4Z" fill="#555"/></svg>
<div class="a" style="left:1190px;top:877px;width:17px;height:18px;background:#e6e6e6;"></div>
<div class="a" style="left:242px;top:894px;width:965px;height:1px;background:#000;"></div>
<div class="a" style="left:242px;top:895px;width:948px;height:80px;background:#fff;"></div>
<div class="a" style="left:242px;top:899px;width:948px;height:16px;background:#ebebeb;"></div>
<div class="a" style="left:242px;top:895px;width:948px;height:80px;overflow:hidden">
<div class="t" style="left:4px;top:6px;font-size:13px;color:#000">LOG FILE :</div>
<div class="t" style="left:4px;top:22px;font-size:13px;color:#000">This is pdfTeX, Version 3.14159265-2.6-1.40.19 (MiKTeX 2.9.6880 64-bit) (preloaded format=pdflatex 2018.12.3) 25 DEC 2018 17:04</div>
<div class="t" style="left:4px;top:38px;font-size:13px;color:#000">entering extended mode</div>
<div class="t" style="left:4px;top:54px;font-size:13px;color:#008000">**./guide-latex-fr.tex</div>
<div class="t" style="left:4px;top:70px;font-size:13px;color:#008000">(guide-latex-fr.tex</div>
</div>
<div class="a" style="left:246px;top:899px;width:1px;height:16px;background:#000;"></div>
<div class="a" style="left:1190px;top:895px;width:17px;height:80px;background:#e6e6e6;"></div>
<div class="a" style="left:1190px;top:895px;width:1px;height:80px;background:#d4d4d4;"></div>
<div class="a" style="left:1191px;top:911px;width:16px;height:33px;background:linear-gradient(90deg,#fdfdfd,#f0f0f0);border-bottom:1px solid #c8c8c8"></div>
<div class="a" style="left:1191px;top:895px;width:16px;height:17px;background:linear-gradient(90deg,#fdfdfd,#f0f0f0);border-bottom:1px solid #cfcfcf"></div>
<svg class="a" style="left:1195px;top:902px;overflow:visible" width="8" height="4" viewBox="0 0 8 4"><path d="M0 4H8L4 0Z" fill="#555"/></svg>
<div class="a" style="left:1191px;top:958px;width:16px;height:17px;background:linear-gradient(90deg,#fdfdfd,#f0f0f0);border-top:1px solid #cfcfcf"></div>
<svg class="a" style="left:1195px;top:965px;overflow:visible" width="8" height="4" viewBox="0 0 8 4"><path d="M0 0H8L4 4Z" fill="#555"/></svg>
<div class="a" style="left:31px;top:872px;width:178px;height:17px;background:#e6e6e6;"></div>
<div class="a" style="left:31px;top:872px;width:178px;height:1px;background:#d4d4d4;"></div>
<div class="a" style="left:47px;top:873px;width:49px;height:16px;background:linear-gradient(180deg,#fdfdfd,#f0f0f0);border-left:1px solid #c8c8c8;border-right:1px solid #c8c8c8"></div>
<div class="a" style="left:31px;top:873px;width:16px;height:16px;background:linear-gradient(180deg,#fdfdfd,#f0f0f0);border-right:1px solid #cfcfcf"></div>
<svg class="a" style="left:37px;top:877px;overflow:visible" width="4" height="8" viewBox="0 0 4 8"><path d="M4 0V8L0 4Z" fill="#555"/></svg>
<div class="a" style="left:193px;top:873px;width:16px;height:16px;background:linear-gradient(180deg,#fdfdfd,#f0f0f0);border-left:1px solid #cfcfcf"></div>
<svg class="a" style="left:199px;top:877px;overflow:visible" width="4" height="8" viewBox="0 0 4 8"><path d="M0 0V8L4 4Z" fill="#555"/></svg>
<div class="t" style="left:30px;top:895px;font-size:15.5px;color:#e4e4e4;">guide-latex-fr.tex</div>
<div class="a" style="left:0px;top:975px;width:1918px;height:26px;background:#6e6e6e;"></div>
<div class="a" style="left:0px;top:1000px;width:1918px;height:1px;background:#1a1a1a;"></div>
<div class="a" style="left:3px;top:980px;width:74px;height:17px;background:linear-gradient(180deg,#a8a8a8,#8a8a8a);border:1px solid #606060;border-radius:2px;font:bold 10px/15px 'Liberation Sans';letter-spacing:-0.35px;white-space:nowrap;color:#f4f4f4;text-align:center;text-shadow:1px 1px 0 #555;">Structure</div>
<div class="a" style="left:85px;top:980px;width:75px;height:17px;background:linear-gradient(180deg,#a8a8a8,#8a8a8a);border:1px solid #606060;border-radius:2px;font:bold 10px/15px 'Liberation Sans';letter-spacing:-0.35px;white-space:nowrap;color:#f4f4f4;text-align:center;text-shadow:1px 1px 0 #555;">Messages / Log</div>
<div class="a" style="left:168px;top:980px;width:75px;height:17px;background:linear-gradient(180deg,#a8a8a8,#8a8a8a);border:1px solid #606060;border-radius:2px;font:bold 10px/15px 'Liberation Sans';letter-spacing:-0.35px;white-space:nowrap;color:#f4f4f4;text-align:center;text-shadow:1px 1px 0 #555;">Pdf Viewer</div>
<div class="a" style="left:251px;top:980px;width:76px;height:17px;background:linear-gradient(180deg,#fafafa,#e4e4e4);border:1px solid #606060;border-radius:2px;font:bold 10px/15px 'Liberation Sans';letter-spacing:-0.35px;white-space:nowrap;color:#222;text-align:center;">Source Viewer</div>
<div class="t" style="left:335px;top:983px;font-size:13.2px;color:#cfcfcf;font-weight:bold;text-shadow:1px 1px 0 #222">Ready</div>
<div class="t" style="left:1177px;top:981px;font-size:14px;color:#cfcfcf;font-weight:bold;text-shadow:1px 1px 0 #222">UTF-8</div>
<div class="t" style="left:1231px;top:981px;font-size:14px;color:#cfcfcf;font-weight:bold;text-shadow:1px 1px 0 #222">Document maître :D:\ADRIEN\Downloads\Programmations\LaTeX\Aides\guide-latex-fr\guide-latex-fr.tex</div>
</body></html>
